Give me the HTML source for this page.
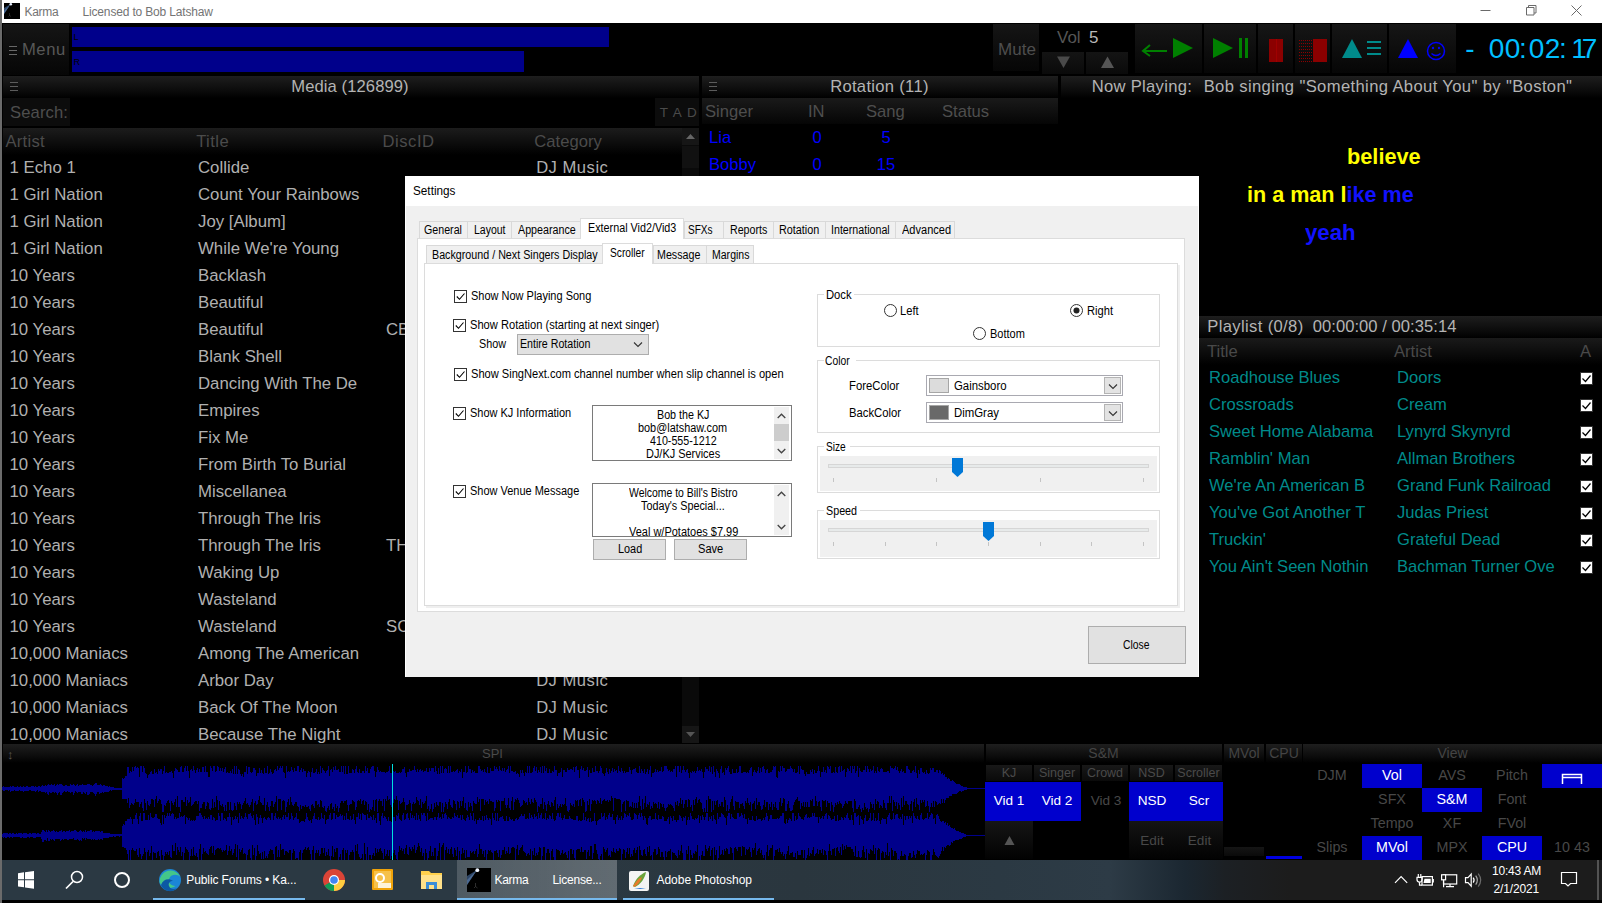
<!DOCTYPE html>
<html><head><meta charset="utf-8"><title>Karma</title>
<style>
html,body{margin:0;padding:0;background:#000;}
body{width:1602px;height:903px;position:relative;overflow:hidden;font-family:"Liberation Sans",sans-serif;}
.b{position:absolute;box-sizing:border-box;}
.t{position:absolute;white-space:pre;margin:0;padding:0;}
.hd{background:linear-gradient(#1e1e1e,#0a0a0a 70%,#000);}
.dlg .t{color:#000;}
svg{position:absolute;overflow:visible;}
</style></head><body>

<div class="b" style="left:0px;top:0px;width:1602px;height:23px;background:#fff;"></div>
<svg style="left:4px;top:3px" width="16" height="16" viewBox="0 0 16 16"><rect width="16" height="16" fill="#000"/><path d="M6.500 1.200L0 5v6z" fill="#3f618f" opacity=".75"/><path d="M6.500 1.200L0 8v3z" fill="#6f95c8" opacity=".5"/><circle cx="6.800" cy="1.300" r="1.300" fill="#e8f0ff"/><path d="M5.500 10v3M4.500 13.500l1-1 1.500 1" stroke="#333" stroke-width=".7" fill="none"/></svg>
<div class="t" style="left:24.52px;letter-spacing:-0.315px;top:3px;font-size:12px;line-height:18px;color:#747474;">Karma</div>
<div class="t" style="left:82.52px;letter-spacing:-0.165px;top:3px;font-size:12px;line-height:18px;color:#747474;">Licensed to Bob Latshaw</div>
<svg style="left:1470px;top:0" width="132" height="23" viewBox="0 0 132 23"><g stroke="#6a6a6a" stroke-width="1" fill="none"><path d="M10.5 10.5h10"/><path d="M56.5 7.500h7.5v7.500h-7.500z M58.500 7.500v-2h7.500v7.500h-2"/><path d="M101.500 5.500l10 10M111.500 5.500l-10 10"/></g></svg>
<div class="b" style="left:3px;top:24px;width:66px;height:51px;background:#111;background:linear-gradient(#151515,#060606)"></div>
<div class="t" style="left:21.94px;letter-spacing:0.613px;top:38px;font-size:16.6px;line-height:23px;color:#585858;">Menu</div>
<div class="b" style="left:72px;top:27px;width:537px;height:20px;background:#00008b;"></div>
<div class="b" style="left:72px;top:51px;width:452px;height:21px;background:#00008b;"></div>
<div class="t " style="left:73.5px;top:30px;font-size:9px;line-height:14px;color:#000;">L</div>
<div class="t " style="left:73.5px;top:55px;font-size:9px;line-height:14px;color:#000;">R</div>
<div class="b" style="left:993px;top:24px;width:46px;height:47px;background:#0e0e0e;background:linear-gradient(#151515,#060606)"></div>
<div class="t " style="left:994px;top:38px;font-size:17px;line-height:23px;color:#4e4e4e;width:46px;text-align:center;">Mute</div>
<div class="t " style="left:1057px;top:26px;font-size:17px;line-height:23px;color:#555;">Vol</div>
<div class="t " style="left:1089px;top:26px;font-size:17px;line-height:23px;color:#b8b8b8;">5</div>
<div class="b" style="left:1042px;top:52px;width:42px;height:22px;background:#111;background:linear-gradient(#141414,#0a0a0a)"></div>
<div class="b" style="left:1086px;top:52px;width:42px;height:22px;background:#111;background:linear-gradient(#141414,#0a0a0a)"></div>
<svg style="left:0;top:0" width="1602" height="100"><path d="M1057 56.500h13l-6.500 11.500z" fill="#4a4a4a"/><path d="M1107.500 56.500l6.500 11.500h-13z" fill="#555"/></svg>
<div class="b" style="left:1135px;top:24px;width:67px;height:49px;background:#0e0e0e;background:linear-gradient(#161616,#060606)"></div>
<div class="b" style="left:1204px;top:24px;width:52px;height:49px;background:#0e0e0e;background:linear-gradient(#161616,#060606)"></div>
<div class="b" style="left:1258px;top:24px;width:35px;height:49px;background:#0e0e0e;background:linear-gradient(#161616,#060606)"></div>
<div class="b" style="left:1295px;top:24px;width:35px;height:49px;background:#0e0e0e;background:linear-gradient(#161616,#060606)"></div>
<div class="b" style="left:1332px;top:24px;width:55px;height:49px;background:#0e0e0e;background:linear-gradient(#161616,#060606)"></div>
<div class="b" style="left:1389px;top:24px;width:67px;height:49px;background:#0e0e0e;background:linear-gradient(#161616,#060606)"></div>
<svg style="left:0;top:0" width="1602" height="100">
<g fill="#008000" stroke="none">
<path d="M1173 38l20 10-20 10z"/>
<path d="M1213 38l20 10-20 10z"/>
<rect x="1239" y="38" width="3" height="20"/><rect x="1245" y="38" width="3" height="20"/>
</g>
<path d="M1167 51h-24M1150 45l-7 6 7 5" stroke="#008000" stroke-width="2" fill="none"/>
<rect x="1269" y="39" width="14" height="23" fill="#8b0000"/><rect x="1276" y="39" width="1" height="23" fill="#a00000"/>
<rect x="1313" y="39" width="14" height="23" fill="#8b0000"/>
<g stroke="#8b0000" stroke-width="1" stroke-dasharray="1 1"><path d="M1299 40.500h14M1299 43.500h14M1299 46.500h14M1299 49.500h14M1299 52.500h14M1299 55.500h14M1299 58.500h14M1299 61.500h14"/></g>
<path d="M1342 58l10-19 10 19z" fill="#008b8b"/>
<path d="M1367 42h14M1367 48h14M1367 54h14" stroke="#008b8b" stroke-width="2"/>
<path d="M1398 58l10-19 10 19z" fill="#0000ff"/>
<circle cx="1436" cy="51" r="8.500" fill="none" stroke="#0000ff" stroke-width="1.500"/>
<circle cx="1433" cy="48" r="1.200" fill="#0000ff"/><circle cx="1439" cy="48" r="1.200" fill="#0000ff"/>
<path d="M1431.500 53.500q4.500 4 9 0" stroke="#0000ff" stroke-width="1.300" fill="none"/>
</svg>
<div class="t" style="left:0;top:0;font-size:28px;line-height:32px;color:#00bfff"><span style="position:absolute;left:1462px;top:33px;width:16px;text-align:center">-</span><span style="position:absolute;left:1478px;top:33px;width:10.5px;text-align:center"> </span><span style="position:absolute;left:1488.5px;top:33px;width:16px;text-align:center">0</span><span style="position:absolute;left:1504.5px;top:33px;width:16px;text-align:center">0</span><span style="position:absolute;left:1519px;top:33px;width:8px;text-align:center">:</span><span style="position:absolute;left:1528.5px;top:33px;width:16px;text-align:center">0</span><span style="position:absolute;left:1544.5px;top:33px;width:16px;text-align:center">2</span><span style="position:absolute;left:1559px;top:33px;width:8px;text-align:center">:</span><span style="position:absolute;left:1567px;top:33px;width:1px;text-align:center"> </span><span style="position:absolute;left:1571px;top:33px;width:16px;text-align:center">1</span><span style="position:absolute;left:1581.5px;top:33px;width:16px;text-align:center">7</span></div>
<div class="b hd" style="left:3px;top:76px;width:696px;height:22px"></div>
<div class="t" style="left:291.34px;letter-spacing:0.078px;top:75px;font-size:16.6px;line-height:23px;color:#b4b4b4;">Media (126899)</div>
<div class="b" style="left:3px;top:98px;width:67px;height:28px;background:#0c0c0c;"></div>
<div class="t" style="left:10.05px;letter-spacing:0.110px;top:101px;font-size:16.6px;line-height:23px;color:#4e4e4e;">Search:</div>
<div class="b" style="left:655px;top:98px;width:44px;height:28px;background:#0c0c0c;"></div>
<div class="t" style="left:659.70px;letter-spacing:1.045px;top:103px;font-size:13.5px;line-height:19px;color:#4a4a4a;">T A D</div>
<div class="b" style="left:3px;top:128px;width:679px;height:27px;background:linear-gradient(#1c1c1c,#000)"></div>
<div class="t" style="left:5.47px;letter-spacing:0.268px;top:130px;font-size:16.6px;line-height:23px;color:#4b4b4b;">Artist</div>
<div class="t" style="left:196.13px;letter-spacing:0.467px;top:130px;font-size:16.6px;line-height:23px;color:#4b4b4b;">Title</div>
<div class="t" style="left:382.44px;letter-spacing:0.556px;top:130px;font-size:16.6px;line-height:23px;color:#4b4b4b;">DiscID</div>
<div class="t" style="left:534.36px;letter-spacing:0.017px;top:130px;font-size:16.6px;line-height:23px;color:#4b4b4b;">Category</div>
<div class="b" style="left:3px;top:155px;width:679px;height:588px;overflow:hidden">
<div class="t " style="left:6.5px;top:1px;font-size:16.8px;line-height:23px;color:#b0b0b0;">1 Echo 1</div>
<div class="t " style="left:195px;top:1px;font-size:16.8px;line-height:23px;color:#b0b0b0;">Collide</div>
<div class="t" style="left:533.14px;letter-spacing:0.507px;top:1px;font-size:16.6px;line-height:23px;color:#b0b0b0;">DJ Music</div>
<div class="t " style="left:6.5px;top:28px;font-size:16.8px;line-height:23px;color:#b0b0b0;">1 Girl Nation</div>
<div class="t " style="left:195px;top:28px;font-size:16.8px;line-height:23px;color:#b0b0b0;">Count Your Rainbows</div>
<div class="t" style="left:533.14px;letter-spacing:0.507px;top:28px;font-size:16.6px;line-height:23px;color:#b0b0b0;">DJ Music</div>
<div class="t " style="left:6.5px;top:55px;font-size:16.8px;line-height:23px;color:#b0b0b0;">1 Girl Nation</div>
<div class="t " style="left:195px;top:55px;font-size:16.8px;line-height:23px;color:#b0b0b0;">Joy [Album]</div>
<div class="t" style="left:533.14px;letter-spacing:0.507px;top:55px;font-size:16.6px;line-height:23px;color:#b0b0b0;">DJ Music</div>
<div class="t " style="left:6.5px;top:82px;font-size:16.8px;line-height:23px;color:#b0b0b0;">1 Girl Nation</div>
<div class="t " style="left:195px;top:82px;font-size:16.8px;line-height:23px;color:#b0b0b0;">While We're Young</div>
<div class="t" style="left:533.14px;letter-spacing:0.507px;top:82px;font-size:16.6px;line-height:23px;color:#b0b0b0;">DJ Music</div>
<div class="t " style="left:6.5px;top:109px;font-size:16.8px;line-height:23px;color:#b0b0b0;">10 Years</div>
<div class="t " style="left:195px;top:109px;font-size:16.8px;line-height:23px;color:#b0b0b0;">Backlash</div>
<div class="t" style="left:533.14px;letter-spacing:0.507px;top:109px;font-size:16.6px;line-height:23px;color:#b0b0b0;">DJ Music</div>
<div class="t " style="left:6.5px;top:136px;font-size:16.8px;line-height:23px;color:#b0b0b0;">10 Years</div>
<div class="t " style="left:195px;top:136px;font-size:16.8px;line-height:23px;color:#b0b0b0;">Beautiful</div>
<div class="t" style="left:533.14px;letter-spacing:0.507px;top:136px;font-size:16.6px;line-height:23px;color:#b0b0b0;">DJ Music</div>
<div class="t " style="left:6.5px;top:163px;font-size:16.8px;line-height:23px;color:#b0b0b0;">10 Years</div>
<div class="t " style="left:195px;top:163px;font-size:16.8px;line-height:23px;color:#b0b0b0;">Beautiful</div>
<div class="t " style="left:383px;top:163px;font-size:16.8px;line-height:23px;color:#b0b0b0;">CB</div>
<div class="t" style="left:533.14px;letter-spacing:0.507px;top:163px;font-size:16.6px;line-height:23px;color:#b0b0b0;">DJ Music</div>
<div class="t " style="left:6.5px;top:190px;font-size:16.8px;line-height:23px;color:#b0b0b0;">10 Years</div>
<div class="t " style="left:195px;top:190px;font-size:16.8px;line-height:23px;color:#b0b0b0;">Blank Shell</div>
<div class="t" style="left:533.14px;letter-spacing:0.507px;top:190px;font-size:16.6px;line-height:23px;color:#b0b0b0;">DJ Music</div>
<div class="t " style="left:6.5px;top:217px;font-size:16.8px;line-height:23px;color:#b0b0b0;">10 Years</div>
<div class="t " style="left:195px;top:217px;font-size:16.8px;line-height:23px;color:#b0b0b0;">Dancing With The De</div>
<div class="t" style="left:533.14px;letter-spacing:0.507px;top:217px;font-size:16.6px;line-height:23px;color:#b0b0b0;">DJ Music</div>
<div class="t " style="left:6.5px;top:244px;font-size:16.8px;line-height:23px;color:#b0b0b0;">10 Years</div>
<div class="t " style="left:195px;top:244px;font-size:16.8px;line-height:23px;color:#b0b0b0;">Empires</div>
<div class="t" style="left:533.14px;letter-spacing:0.507px;top:244px;font-size:16.6px;line-height:23px;color:#b0b0b0;">DJ Music</div>
<div class="t " style="left:6.5px;top:271px;font-size:16.8px;line-height:23px;color:#b0b0b0;">10 Years</div>
<div class="t " style="left:195px;top:271px;font-size:16.8px;line-height:23px;color:#b0b0b0;">Fix Me</div>
<div class="t" style="left:533.14px;letter-spacing:0.507px;top:271px;font-size:16.6px;line-height:23px;color:#b0b0b0;">DJ Music</div>
<div class="t " style="left:6.5px;top:298px;font-size:16.8px;line-height:23px;color:#b0b0b0;">10 Years</div>
<div class="t " style="left:195px;top:298px;font-size:16.8px;line-height:23px;color:#b0b0b0;">From Birth To Burial</div>
<div class="t" style="left:533.14px;letter-spacing:0.507px;top:298px;font-size:16.6px;line-height:23px;color:#b0b0b0;">DJ Music</div>
<div class="t " style="left:6.5px;top:325px;font-size:16.8px;line-height:23px;color:#b0b0b0;">10 Years</div>
<div class="t " style="left:195px;top:325px;font-size:16.8px;line-height:23px;color:#b0b0b0;">Miscellanea</div>
<div class="t" style="left:533.14px;letter-spacing:0.507px;top:325px;font-size:16.6px;line-height:23px;color:#b0b0b0;">DJ Music</div>
<div class="t " style="left:6.5px;top:352px;font-size:16.8px;line-height:23px;color:#b0b0b0;">10 Years</div>
<div class="t " style="left:195px;top:352px;font-size:16.8px;line-height:23px;color:#b0b0b0;">Through The Iris</div>
<div class="t" style="left:533.14px;letter-spacing:0.507px;top:352px;font-size:16.6px;line-height:23px;color:#b0b0b0;">DJ Music</div>
<div class="t " style="left:6.5px;top:379px;font-size:16.8px;line-height:23px;color:#b0b0b0;">10 Years</div>
<div class="t " style="left:195px;top:379px;font-size:16.8px;line-height:23px;color:#b0b0b0;">Through The Iris</div>
<div class="t " style="left:383px;top:379px;font-size:16.8px;line-height:23px;color:#b0b0b0;">TH</div>
<div class="t" style="left:533.14px;letter-spacing:0.507px;top:379px;font-size:16.6px;line-height:23px;color:#b0b0b0;">DJ Music</div>
<div class="t " style="left:6.5px;top:406px;font-size:16.8px;line-height:23px;color:#b0b0b0;">10 Years</div>
<div class="t " style="left:195px;top:406px;font-size:16.8px;line-height:23px;color:#b0b0b0;">Waking Up</div>
<div class="t" style="left:533.14px;letter-spacing:0.507px;top:406px;font-size:16.6px;line-height:23px;color:#b0b0b0;">DJ Music</div>
<div class="t " style="left:6.5px;top:433px;font-size:16.8px;line-height:23px;color:#b0b0b0;">10 Years</div>
<div class="t " style="left:195px;top:433px;font-size:16.8px;line-height:23px;color:#b0b0b0;">Wasteland</div>
<div class="t" style="left:533.14px;letter-spacing:0.507px;top:433px;font-size:16.6px;line-height:23px;color:#b0b0b0;">DJ Music</div>
<div class="t " style="left:6.5px;top:460px;font-size:16.8px;line-height:23px;color:#b0b0b0;">10 Years</div>
<div class="t " style="left:195px;top:460px;font-size:16.8px;line-height:23px;color:#b0b0b0;">Wasteland</div>
<div class="t " style="left:383px;top:460px;font-size:16.8px;line-height:23px;color:#b0b0b0;">SC</div>
<div class="t" style="left:533.14px;letter-spacing:0.507px;top:460px;font-size:16.6px;line-height:23px;color:#b0b0b0;">DJ Music</div>
<div class="t " style="left:6.5px;top:487px;font-size:16.8px;line-height:23px;color:#b0b0b0;">10,000 Maniacs</div>
<div class="t " style="left:195px;top:487px;font-size:16.8px;line-height:23px;color:#b0b0b0;">Among The American</div>
<div class="t" style="left:533.14px;letter-spacing:0.507px;top:487px;font-size:16.6px;line-height:23px;color:#b0b0b0;">DJ Music</div>
<div class="t " style="left:6.5px;top:514px;font-size:16.8px;line-height:23px;color:#b0b0b0;">10,000 Maniacs</div>
<div class="t " style="left:195px;top:514px;font-size:16.8px;line-height:23px;color:#b0b0b0;">Arbor Day</div>
<div class="t" style="left:533.14px;letter-spacing:0.507px;top:514px;font-size:16.6px;line-height:23px;color:#b0b0b0;">DJ Music</div>
<div class="t " style="left:6.5px;top:541px;font-size:16.8px;line-height:23px;color:#b0b0b0;">10,000 Maniacs</div>
<div class="t " style="left:195px;top:541px;font-size:16.8px;line-height:23px;color:#b0b0b0;">Back Of The Moon</div>
<div class="t" style="left:533.14px;letter-spacing:0.507px;top:541px;font-size:16.6px;line-height:23px;color:#b0b0b0;">DJ Music</div>
<div class="t " style="left:6.5px;top:568px;font-size:16.8px;line-height:23px;color:#b0b0b0;">10,000 Maniacs</div>
<div class="t " style="left:195px;top:568px;font-size:16.8px;line-height:23px;color:#b0b0b0;">Because The Night</div>
<div class="t" style="left:533.14px;letter-spacing:0.507px;top:568px;font-size:16.6px;line-height:23px;color:#b0b0b0;">DJ Music</div>
</div>
<div class="b" style="left:682px;top:128px;width:17px;height:615px;background:#0a0a0a;"></div>
<div class="b" style="left:682px;top:128px;width:17px;height:17px;background:#161616;"></div>
<div class="b" style="left:682px;top:726px;width:17px;height:17px;background:#161616;"></div>
<div class="b" style="left:682px;top:146px;width:17px;height:22px;background:#111;"></div>
<svg style="left:0;top:0" width="1602" height="903"><path d="M686 139l4.500-5 4.500 5z" fill="#666"/><path d="M686 732l4.500 5 4.500-5z" fill="#555"/></svg>
<div class="b hd" style="left:702px;top:76px;width:356px;height:22px"></div>
<div class="t" style="left:830.14px;letter-spacing:0.305px;top:75px;font-size:16.6px;line-height:23px;color:#b4b4b4;">Rotation (11)</div>
<div class="b" style="left:702px;top:98px;width:356px;height:26px;background:linear-gradient(#1a1a1a,#050505)"></div>
<div class="t " style="left:705px;top:100px;font-size:16.6px;line-height:23px;color:#4e4e4e;">Singer</div>
<div class="t " style="left:808px;top:100px;font-size:16.6px;line-height:23px;color:#4e4e4e;">IN</div>
<div class="t " style="left:866px;top:100px;font-size:16.6px;line-height:23px;color:#4e4e4e;">Sang</div>
<div class="t " style="left:942px;top:100px;font-size:16.6px;line-height:23px;color:#4e4e4e;">Status</div>
<div class="t " style="left:709px;top:126px;font-size:16.6px;line-height:23px;color:#0000ff;">Lia</div>
<div class="t " style="left:797px;top:126px;font-size:16.6px;line-height:23px;color:#0000ff;width:40px;text-align:center;">0</div>
<div class="t " style="left:866px;top:126px;font-size:16.6px;line-height:23px;color:#0000ff;width:40px;text-align:center;">5</div>
<div class="t " style="left:709px;top:153px;font-size:16.6px;line-height:23px;color:#0000ff;">Bobby</div>
<div class="t " style="left:797px;top:153px;font-size:16.6px;line-height:23px;color:#0000ff;width:40px;text-align:center;">0</div>
<div class="t " style="left:866px;top:153px;font-size:16.6px;line-height:23px;color:#0000ff;width:40px;text-align:center;">15</div>
<svg style="left:0;top:0" width="800" height="100" shape-rendering="crispEdges"><g fill="#686868"><rect x="9" y="46" width="8" height="1"/><rect x="9" y="50" width="8" height="1"/><rect x="9" y="54" width="8" height="1"/></g><g fill="#5c5c5c"><rect x="10" y="82" width="8" height="1"/><rect x="10" y="86" width="8" height="1"/><rect x="10" y="90" width="8" height="1"/><rect x="709" y="82" width="8" height="1"/><rect x="709" y="86" width="8" height="1"/><rect x="709" y="90" width="8" height="1"/></g></svg>
<div class="b hd" style="left:1061px;top:76px;width:541px;height:22px"></div>
<div class="t" style="left:1091.64px;letter-spacing:0.309px;top:75px;font-size:16.6px;line-height:23px;color:#b4b4b4;">Now Playing:</div>
<div class="t" style="left:1203.64px;letter-spacing:0.371px;top:75px;font-size:16.6px;line-height:23px;color:#b4b4b4;">Bob singing "Something About You" by "Boston"</div>
<div class="t" style="left:1347.37px;transform:scaleX(1.0105);transform-origin:0 50%;top:143px;font-size:21.5px;line-height:28px;color:#ffff00;font-weight:bold;">believe</div>
<div class="t" style="left:1247.29px;transform:scaleX(1.0033);transform-origin:0 50%;top:181px;font-size:21.5px;line-height:28px;color:#ffff00;font-weight:bold;">in a man l<span style="color:#1212ff">ike me</span></div>
<div class="t" style="left:1305.03px;transform:scaleX(1.0336);transform-origin:0 50%;top:219px;font-size:21.5px;line-height:28px;color:#1212ff;font-weight:bold;">yeah</div>
<div class="b hd" style="left:1061px;top:316px;width:541px;height:22px"></div>
<div class="t" style="left:1207.24px;letter-spacing:0.359px;top:315px;font-size:16.6px;line-height:23px;color:#b4b4b4;">Playlist (0/8)</div>
<div class="t" style="left:1312.75px;letter-spacing:0.037px;top:315px;font-size:16.6px;line-height:23px;color:#b4b4b4;">00:00:00 / 00:35:14</div>
<div class="b" style="left:1061px;top:338px;width:541px;height:27px;background:linear-gradient(#1a1a1a,#000)"></div>
<div class="t " style="left:1207px;top:340px;font-size:16.6px;line-height:23px;color:#494949;">Title</div>
<div class="t " style="left:1394px;top:340px;font-size:16.6px;line-height:23px;color:#494949;">Artist</div>
<div class="t " style="left:1580px;top:340px;font-size:16.6px;line-height:23px;color:#494949;">A</div>
<div class="t " style="left:1209px;top:366px;font-size:16.6px;line-height:23px;color:#008b8b;">Roadhouse Blues</div>
<div class="t " style="left:1397px;top:366px;font-size:16.6px;line-height:23px;color:#008b8b;">Doors</div>
<svg style="left:1580px;top:372px" width="13" height="13" viewBox="0 0 13 13"><rect width="13" height="13" fill="#fff"/><rect x=".5" y=".5" width="12" height="12" fill="none" stroke="#333"/><path d="M2.500 6.500l3 3 5-6" stroke="#000" stroke-width="1.200" fill="none"/></svg>
<div class="t " style="left:1209px;top:393px;font-size:16.6px;line-height:23px;color:#008b8b;">Crossroads</div>
<div class="t " style="left:1397px;top:393px;font-size:16.6px;line-height:23px;color:#008b8b;">Cream</div>
<svg style="left:1580px;top:399px" width="13" height="13" viewBox="0 0 13 13"><rect width="13" height="13" fill="#fff"/><rect x=".5" y=".5" width="12" height="12" fill="none" stroke="#333"/><path d="M2.500 6.500l3 3 5-6" stroke="#000" stroke-width="1.200" fill="none"/></svg>
<div class="t " style="left:1209px;top:420px;font-size:16.6px;line-height:23px;color:#008b8b;">Sweet Home Alabama</div>
<div class="t " style="left:1397px;top:420px;font-size:16.6px;line-height:23px;color:#008b8b;">Lynyrd Skynyrd</div>
<svg style="left:1580px;top:426px" width="13" height="13" viewBox="0 0 13 13"><rect width="13" height="13" fill="#fff"/><rect x=".5" y=".5" width="12" height="12" fill="none" stroke="#333"/><path d="M2.500 6.500l3 3 5-6" stroke="#000" stroke-width="1.200" fill="none"/></svg>
<div class="t " style="left:1209px;top:447px;font-size:16.6px;line-height:23px;color:#008b8b;">Ramblin' Man</div>
<div class="t " style="left:1397px;top:447px;font-size:16.6px;line-height:23px;color:#008b8b;">Allman Brothers</div>
<svg style="left:1580px;top:453px" width="13" height="13" viewBox="0 0 13 13"><rect width="13" height="13" fill="#fff"/><rect x=".5" y=".5" width="12" height="12" fill="none" stroke="#333"/><path d="M2.500 6.500l3 3 5-6" stroke="#000" stroke-width="1.200" fill="none"/></svg>
<div class="t " style="left:1209px;top:474px;font-size:16.6px;line-height:23px;color:#008b8b;">We're An American B</div>
<div class="t " style="left:1397px;top:474px;font-size:16.6px;line-height:23px;color:#008b8b;">Grand Funk Railroad</div>
<svg style="left:1580px;top:480px" width="13" height="13" viewBox="0 0 13 13"><rect width="13" height="13" fill="#fff"/><rect x=".5" y=".5" width="12" height="12" fill="none" stroke="#333"/><path d="M2.500 6.500l3 3 5-6" stroke="#000" stroke-width="1.200" fill="none"/></svg>
<div class="t " style="left:1209px;top:501px;font-size:16.6px;line-height:23px;color:#008b8b;">You've Got Another T</div>
<div class="t " style="left:1397px;top:501px;font-size:16.6px;line-height:23px;color:#008b8b;">Judas Priest</div>
<svg style="left:1580px;top:507px" width="13" height="13" viewBox="0 0 13 13"><rect width="13" height="13" fill="#fff"/><rect x=".5" y=".5" width="12" height="12" fill="none" stroke="#333"/><path d="M2.500 6.500l3 3 5-6" stroke="#000" stroke-width="1.200" fill="none"/></svg>
<div class="t " style="left:1209px;top:528px;font-size:16.6px;line-height:23px;color:#008b8b;">Truckin'</div>
<div class="t " style="left:1397px;top:528px;font-size:16.6px;line-height:23px;color:#008b8b;">Grateful Dead</div>
<svg style="left:1580px;top:534px" width="13" height="13" viewBox="0 0 13 13"><rect width="13" height="13" fill="#fff"/><rect x=".5" y=".5" width="12" height="12" fill="none" stroke="#333"/><path d="M2.500 6.500l3 3 5-6" stroke="#000" stroke-width="1.200" fill="none"/></svg>
<div class="t " style="left:1209px;top:555px;font-size:16.6px;line-height:23px;color:#008b8b;">You Ain't Seen Nothin</div>
<div class="t " style="left:1397px;top:555px;font-size:16.6px;line-height:23px;color:#008b8b;">Bachman Turner Ove</div>
<svg style="left:1580px;top:561px" width="13" height="13" viewBox="0 0 13 13"><rect width="13" height="13" fill="#fff"/><rect x=".5" y=".5" width="12" height="12" fill="none" stroke="#333"/><path d="M2.500 6.500l3 3 5-6" stroke="#000" stroke-width="1.200" fill="none"/></svg>
<div class="b hd" style="left:3px;top:744px;width:981px;height:19px"></div>
<div class="t " style="left:482px;top:744px;font-size:13px;line-height:19px;color:#4a4a4a;">SPI</div>
<div class="t " style="left:7px;top:745px;font-size:13px;line-height:19px;color:#555;">↕</div>
<svg style="left:0;top:0" width="1602" height="903" shape-rendering="crispEdges"><path fill="#00008b" d="M2 787v3h1v-3zM3 786v5h1v-5zM4 787v4h1v-4zM5 787v3h1v-3zM6 787v3h1v-3zM7 787v3h1v-3zM8 787v4h1v-4zM9 787v3h1v-3zM10 786v6h1v-6zM11 787v4h1v-4zM12 786v5h1v-5zM13 786v5h1v-5zM14 787v3h1v-3zM15 787v4h1v-4zM16 787v4h1v-4zM17 786v5h1v-5zM18 787v4h1v-4zM19 787v3h1v-3zM20 786v5h1v-5zM21 787v4h1v-4zM22 787v4h1v-4zM23 786v6h1v-6zM24 787v4h1v-4zM25 787v4h1v-4zM26 786v5h1v-5zM27 786v5h1v-5zM28 787v4h1v-4zM29 787v3h1v-3zM30 787v3h1v-3zM31 786v5h1v-5zM32 786v5h1v-5zM33 786v5h1v-5zM34 787v4h1v-4zM35 786v6h1v-6zM36 787v4h1v-4zM37 787v3h1v-3zM38 786v6h1v-6zM39 786v5h1v-5zM40 787v4h1v-4zM41 786v6h1v-6zM42 785v7h1v-7zM43 786v6h1v-6zM44 786v6h1v-6zM45 785v8h1v-8zM46 786v6h1v-6zM47 785v9h1v-9zM48 784v11h1v-11zM49 785v7h1v-7zM50 785v8h1v-8zM51 784v9h1v-9zM52 785v7h1v-7zM53 785v7h1v-7zM54 784v9h1v-9zM55 786v6h1v-6zM56 785v8h1v-8zM57 784v11h1v-11zM58 785v8h1v-8zM59 784v8h1v-8zM60 784v11h1v-11zM61 784v11h1v-11zM62 785v8h1v-8zM63 786v6h1v-6zM64 786v5h1v-5zM65 785v7h1v-7zM66 785v7h1v-7zM67 786v5h1v-5zM68 786v6h1v-6zM69 786v6h1v-6zM70 784v9h1v-9zM71 785v7h1v-7zM72 785v7h1v-7zM73 784v11h1v-11zM74 785v8h1v-8zM75 786v5h1v-5zM76 785v7h1v-7zM77 784v9h1v-9zM78 786v6h1v-6zM79 785v7h1v-7zM80 785v7h1v-7zM81 785v9h1v-9zM82 784v10h1v-10zM83 785v7h1v-7zM84 785v8h1v-8zM85 785v9h1v-9zM86 785v7h1v-7zM87 784v11h1v-11zM88 784v11h1v-11zM89 784v10h1v-10zM90 785v7h1v-7zM91 785v7h1v-7zM92 786v6h1v-6zM93 785v8h1v-8zM94 784v10h1v-10zM95 783v13h1v-13zM96 783v11h1v-11zM97 785v7h1v-7zM98 785v7h1v-7zM99 785v9h1v-9zM100 784v9h1v-9zM101 785v8h1v-8zM102 786v6h1v-6zM103 785v8h1v-8zM104 785v7h1v-7zM105 786v6h1v-6zM106 786v6h1v-6zM107 786v6h1v-6zM108 787v5h1v-5zM109 786v5h1v-5zM110 787v3h1v-3zM111 787v4h1v-4zM112 787v3h1v-3zM113 787v3h1v-3zM114 788v2h1v-2zM115 788v2h1v-2zM116 788v2h1v-2zM117 788v2h1v-2zM118 788v2h1v-2zM119 788v2h1v-2zM120 788v2h1v-2zM121 788v2h1v-2zM122 778v21h1v-21zM123 779v20h1v-20zM124 778v21h1v-21zM125 776v23h1v-23zM126 776v23h1v-23zM127 767v36h1v-36zM128 767v31h1v-31zM129 773v35h1v-35zM130 771v34h1v-34zM131 772v31h1v-31zM132 767v37h1v-37zM133 771v34h1v-34zM134 767v36h1v-36zM135 766v33h1v-33zM136 768v34h1v-34zM137 767v35h1v-35zM138 768v34h1v-34zM139 777v30h1v-30zM140 766v38h1v-38zM141 766v36h1v-36zM142 772v36h1v-36zM143 766v45h1v-45zM144 768v31h1v-31zM145 773v30h1v-30zM146 774v36h1v-36zM147 778v23h1v-23zM148 775v30h1v-30zM149 774v32h1v-32zM150 772v32h1v-32zM151 771v28h1v-28zM152 774v25h1v-25zM153 774v26h1v-26zM154 769v38h1v-38zM155 773v26h1v-26zM156 772v24h1v-24zM157 774v29h1v-29zM158 769v32h1v-32zM159 771v28h1v-28zM160 769v31h1v-31zM161 769v35h1v-35zM162 774v38h1v-38zM163 771v41h1v-41zM164 766v39h1v-39zM165 773v33h1v-33zM166 772v31h1v-31zM167 773v28h1v-28zM168 773v27h1v-27zM169 772v31h1v-31zM170 772v39h1v-39zM171 771v30h1v-30zM172 773v30h1v-30zM173 778v27h1v-27zM174 771v31h1v-31zM175 768v31h1v-31zM176 769v38h1v-38zM177 770v26h1v-26zM178 772v35h1v-35zM179 772v35h1v-35zM180 767v45h1v-45zM181 766v34h1v-34zM182 772v28h1v-28zM183 772v30h1v-30zM184 768v34h1v-34zM185 766v31h1v-31zM186 771v35h1v-35zM187 766v34h1v-34zM188 771v32h1v-32zM189 778v24h1v-24zM190 770v27h1v-27zM191 769v37h1v-37zM192 771v34h1v-34zM193 766v38h1v-38zM194 770v32h1v-32zM195 773v28h1v-28zM196 770v31h1v-31zM197 768v36h1v-36zM198 772v29h1v-29zM199 769v42h1v-42zM200 772v36h1v-36zM201 772v36h1v-36zM202 767v37h1v-37zM203 767v35h1v-35zM204 772v30h1v-30zM205 766v43h1v-43zM206 772v34h1v-34zM207 772v30h1v-30zM208 777v26h1v-26zM209 777v32h1v-32zM210 766v44h1v-44zM211 768v40h1v-40zM212 771v28h1v-28zM213 766v42h1v-42zM214 766v36h1v-36zM215 772v35h1v-35zM216 771v25h1v-25zM217 766v34h1v-34zM218 767v43h1v-43zM219 771v30h1v-30zM220 768v37h1v-37zM221 771v35h1v-35zM222 768v36h1v-36zM223 772v35h1v-35zM224 769v42h1v-42zM225 767v38h1v-38zM226 773v38h1v-38zM227 772v30h1v-30zM228 773v29h1v-29zM229 773v37h1v-37zM230 771v31h1v-31zM231 773v37h1v-37zM232 769v42h1v-42zM233 774v36h1v-36zM234 766v37h1v-37zM235 774v32h1v-32zM236 766v44h1v-44zM237 774v28h1v-28zM238 769v35h1v-35zM239 770v32h1v-32zM240 774v30h1v-30zM241 776v33h1v-33zM242 774v31h1v-31zM243 777v26h1v-26zM244 772v29h1v-29zM245 772v26h1v-26zM246 766v38h1v-38zM247 774v29h1v-29zM248 767v38h1v-38zM249 767v40h1v-40zM250 772v33h1v-33zM251 773v29h1v-29zM252 772v27h1v-27zM253 768v43h1v-43zM254 768v35h1v-35zM255 770v31h1v-31zM256 776v29h1v-29zM257 773v31h1v-31zM258 773v27h1v-27zM259 768v28h1v-28zM260 773v29h1v-29zM261 770v33h1v-33zM262 773v32h1v-32zM263 774v31h1v-31zM264 768v30h1v-30zM265 773v38h1v-38zM266 773v32h1v-32zM267 766v36h1v-36zM268 774v33h1v-33zM269 773v38h1v-38zM270 769v37h1v-37zM271 772v29h1v-29zM272 774v27h1v-27zM273 773v34h1v-34zM274 770v34h1v-34zM275 769v33h1v-33zM276 771v25h1v-25zM277 766v45h1v-45zM278 770v29h1v-29zM279 768v31h1v-31zM280 766v33h1v-33zM281 768v42h1v-42zM282 766v35h1v-35zM283 772v28h1v-28zM284 773v28h1v-28zM285 778v34h1v-34zM286 766v41h1v-41zM287 772v30h1v-30zM288 771v28h1v-28zM289 772v33h1v-33zM290 771v26h1v-26zM291 767v35h1v-35zM292 770v35h1v-35zM293 772v34h1v-34zM294 768v36h1v-36zM295 771v31h1v-31zM296 771v31h1v-31zM297 766v40h1v-40zM298 766v41h1v-41zM299 772v39h1v-39zM300 770v35h1v-35zM301 768v41h1v-41zM302 772v34h1v-34zM303 769v37h1v-37zM304 771v36h1v-36zM305 771v34h1v-34zM306 777v30h1v-30zM307 773v34h1v-34zM308 771v35h1v-35zM309 772v37h1v-37zM310 777v34h1v-34zM311 772v33h1v-33zM312 768v36h1v-36zM313 773v33h1v-33zM314 773v35h1v-35zM315 772v29h1v-29zM316 769v32h1v-32zM317 774v31h1v-31zM318 772v32h1v-32zM319 774v33h1v-33zM320 766v34h1v-34zM321 773v28h1v-28zM322 768v39h1v-39zM323 770v38h1v-38zM324 771v35h1v-35zM325 773v38h1v-38zM326 771v41h1v-41zM327 770v38h1v-38zM328 766v40h1v-40zM329 776v34h1v-34zM330 770v34h1v-34zM331 769v34h1v-34zM332 772v37h1v-37zM333 767v40h1v-40zM334 770v41h1v-41zM335 766v38h1v-38zM336 770v38h1v-38zM337 770v36h1v-36zM338 769v43h1v-43zM339 772v36h1v-36zM340 772v31h1v-31zM341 766v35h1v-35zM342 772v29h1v-29zM343 766v37h1v-37zM344 774v27h1v-27zM345 766v35h1v-35zM346 774v26h1v-26zM347 774v31h1v-31zM348 766v45h1v-45zM349 773v32h1v-32zM350 773v31h1v-31zM351 773v31h1v-31zM352 769v31h1v-31zM353 770v31h1v-31zM354 773v29h1v-29zM355 769v41h1v-41zM356 766v41h1v-41zM357 772v29h1v-29zM358 773v27h1v-27zM359 769v32h1v-32zM360 773v26h1v-26zM361 773v31h1v-31zM362 771v30h1v-30zM363 771v29h1v-29zM364 773v32h1v-32zM365 766v35h1v-35zM366 771v31h1v-31zM367 768v42h1v-42zM368 773v31h1v-31zM369 773v39h1v-39zM370 769v40h1v-40zM371 767v43h1v-43zM372 766v41h1v-41zM373 766v34h1v-34zM374 771v40h1v-40zM375 777v23h1v-23zM376 772v27h1v-27zM377 767v45h1v-45zM378 770v31h1v-31zM379 772v27h1v-27zM380 771v30h1v-30zM381 772v29h1v-29zM382 772v34h1v-34zM383 772v27h1v-27zM384 772v39h1v-39zM385 773v26h1v-26zM386 772v29h1v-29zM387 772v24h1v-24zM388 771v29h1v-29zM389 766v33h1v-33zM390 773v32h1v-32zM391 773v34h1v-34zM392 777v24h1v-24zM393 771v32h1v-32zM394 772v27h1v-27zM395 771v29h1v-29zM396 773v23h1v-23zM397 773v27h1v-27zM398 773v37h1v-37zM399 772v29h1v-29zM400 773v31h1v-31zM401 772v31h1v-31zM402 769v33h1v-33zM403 769v29h1v-29zM404 767v35h1v-35zM405 773v37h1v-37zM406 777v28h1v-28zM407 772v33h1v-33zM408 772v32h1v-32zM409 769v31h1v-31zM410 771v32h1v-32zM411 771v40h1v-40zM412 770v34h1v-34zM413 770v32h1v-32zM414 766v38h1v-38zM415 770v33h1v-33zM416 772v25h1v-25zM417 769v31h1v-31zM418 772v29h1v-29zM419 770v35h1v-35zM420 769v30h1v-30zM421 771v37h1v-37zM422 770v32h1v-32zM423 772v32h1v-32zM424 771v32h1v-32zM425 771v30h1v-30zM426 768v28h1v-28zM427 772v37h1v-37zM428 772v34h1v-34zM429 768v43h1v-43zM430 771v38h1v-38zM431 768v36h1v-36zM432 768v44h1v-44zM433 768v41h1v-41zM434 772v31h1v-31zM435 766v41h1v-41zM436 771v31h1v-31zM437 774v31h1v-31zM438 768v38h1v-38zM439 774v28h1v-28zM440 766v36h1v-36zM441 773v39h1v-39zM442 766v37h1v-37zM443 773v39h1v-39zM444 769v38h1v-38zM445 768v34h1v-34zM446 769v35h1v-35zM447 773v36h1v-36zM448 766v36h1v-36zM449 773v26h1v-26zM450 766v39h1v-39zM451 772v35h1v-35zM452 772v36h1v-36zM453 771v29h1v-29zM454 772v29h1v-29zM455 771v33h1v-33zM456 770v40h1v-40zM457 769v32h1v-32zM458 773v29h1v-29zM459 771v37h1v-37zM460 772v29h1v-29zM461 769v37h1v-37zM462 778v23h1v-23zM463 772v25h1v-25zM464 772v36h1v-36zM465 766v37h1v-37zM466 773v37h1v-37zM467 772v39h1v-39zM468 766v36h1v-36zM469 769v38h1v-38zM470 769v34h1v-34zM471 773v33h1v-33zM472 770v41h1v-41zM473 772v29h1v-29zM474 771v32h1v-32zM475 773v31h1v-31zM476 773v31h1v-31zM477 773v24h1v-24zM478 766v36h1v-36zM479 766v33h1v-33zM480 769v42h1v-42zM481 771v28h1v-28zM482 770v29h1v-29zM483 772v27h1v-27zM484 769v36h1v-36zM485 772v28h1v-28zM486 773v29h1v-29zM487 767v34h1v-34zM488 773v31h1v-31zM489 773v26h1v-26zM490 768v33h1v-33zM491 771v30h1v-30zM492 771v31h1v-31zM493 771v31h1v-31zM494 766v45h1v-45zM495 769v39h1v-39zM496 767v33h1v-33zM497 769v33h1v-33zM498 771v29h1v-29zM499 766v35h1v-35zM500 770v41h1v-41zM501 771v30h1v-30zM502 768v33h1v-33zM503 771v30h1v-30zM504 768v30h1v-30zM505 772v33h1v-33zM506 770v38h1v-38zM507 769v36h1v-36zM508 766v32h1v-32zM509 773v35h1v-35zM510 766v44h1v-44zM511 771v30h1v-30zM512 771v26h1v-26zM513 772v38h1v-38zM514 772v30h1v-30zM515 771v28h1v-28zM516 774v26h1v-26zM517 773v25h1v-25zM518 774v26h1v-26zM519 777v26h1v-26zM520 770v37h1v-37zM521 773v33h1v-33zM522 770v35h1v-35zM523 773v27h1v-27zM524 776v25h1v-25zM525 772v31h1v-31zM526 773v29h1v-29zM527 766v39h1v-39zM528 773v25h1v-25zM529 766v36h1v-36zM530 773v31h1v-31zM531 773v26h1v-26zM532 772v30h1v-30zM533 768v35h1v-35zM534 766v32h1v-32zM535 771v29h1v-29zM536 767v35h1v-35zM537 773v39h1v-39zM538 770v36h1v-36zM539 772v35h1v-35zM540 767v37h1v-37zM541 773v31h1v-31zM542 766v32h1v-32zM543 773v36h1v-36zM544 766v36h1v-36zM545 771v34h1v-34zM546 768v43h1v-43zM547 773v31h1v-31zM548 773v28h1v-28zM549 769v36h1v-36zM550 773v34h1v-34zM551 773v29h1v-29zM552 771v32h1v-32zM553 772v34h1v-34zM554 766v34h1v-34zM555 770v27h1v-27zM556 770v40h1v-40zM557 776v28h1v-28zM558 773v35h1v-35zM559 773v33h1v-33zM560 772v32h1v-32zM561 768v39h1v-39zM562 777v27h1v-27zM563 770v35h1v-35zM564 770v34h1v-34zM565 772v26h1v-26zM566 772v34h1v-34zM567 768v43h1v-43zM568 770v42h1v-42zM569 770v40h1v-40zM570 769v34h1v-34zM571 769v36h1v-36zM572 770v36h1v-36zM573 767v37h1v-37zM574 772v35h1v-35zM575 767v33h1v-33zM576 766v35h1v-35zM577 770v30h1v-30zM578 770v36h1v-36zM579 778v22h1v-22zM580 769v30h1v-30zM581 766v40h1v-40zM582 770v28h1v-28zM583 768v32h1v-32zM584 771v31h1v-31zM585 771v41h1v-41zM586 770v41h1v-41zM587 767v34h1v-34zM588 777v28h1v-28zM589 770v29h1v-29zM590 773v38h1v-38zM591 773v31h1v-31zM592 768v32h1v-32zM593 772v29h1v-29zM594 772v28h1v-28zM595 766v35h1v-35zM596 771v33h1v-33zM597 771v29h1v-29zM598 773v28h1v-28zM599 771v32h1v-32zM600 766v32h1v-32zM601 768v36h1v-36zM602 773v28h1v-28zM603 774v26h1v-26zM604 776v23h1v-23zM605 773v28h1v-28zM606 768v33h1v-33zM607 772v28h1v-28zM608 774v28h1v-28zM609 769v31h1v-31zM610 773v28h1v-28zM611 771v25h1v-25zM612 768v30h1v-30zM613 772v39h1v-39zM614 769v29h1v-29zM615 771v27h1v-27zM616 770v29h1v-29zM617 773v26h1v-26zM618 766v33h1v-33zM619 771v28h1v-28zM620 772v28h1v-28zM621 768v44h1v-44zM622 771v33h1v-33zM623 773v29h1v-29zM624 771v30h1v-30zM625 773v38h1v-38zM626 772v28h1v-28zM627 772v29h1v-29zM628 772v29h1v-29zM629 767v40h1v-40zM630 770v36h1v-36zM631 774v33h1v-33zM632 770v32h1v-32zM633 769v39h1v-39zM634 769v34h1v-34zM635 768v40h1v-40zM636 772v31h1v-31zM637 773v35h1v-35zM638 773v29h1v-29zM639 766v30h1v-30zM640 773v33h1v-33zM641 769v41h1v-41zM642 771v28h1v-28zM643 773v36h1v-36zM644 769v34h1v-34zM645 774v22h1v-22zM646 772v35h1v-35zM647 769v35h1v-35zM648 774v31h1v-31zM649 770v32h1v-32zM650 766v43h1v-43zM651 777v29h1v-29zM652 773v35h1v-35zM653 773v29h1v-29zM654 772v32h1v-32zM655 769v34h1v-34zM656 772v32h1v-32zM657 770v38h1v-38zM658 772v30h1v-30zM659 771v38h1v-38zM660 771v32h1v-32zM661 767v37h1v-37zM662 772v35h1v-35zM663 771v33h1v-33zM664 766v42h1v-42zM665 766v45h1v-45zM666 766v42h1v-42zM667 769v38h1v-38zM668 771v33h1v-33zM669 770v35h1v-35zM670 772v32h1v-32zM671 771v34h1v-34zM672 772v34h1v-34zM673 769v39h1v-39zM674 769v42h1v-42zM675 766v36h1v-36zM676 777v28h1v-28zM677 766v35h1v-35zM678 766v40h1v-40zM679 772v31h1v-31zM680 766v32h1v-32zM681 773v31h1v-31zM682 770v30h1v-30zM683 766v42h1v-42zM684 770v34h1v-34zM685 772v28h1v-28zM686 770v30h1v-30zM687 769v38h1v-38zM688 773v26h1v-26zM689 778v22h1v-22zM690 772v35h1v-35zM691 773v32h1v-32zM692 771v40h1v-40zM693 772v28h1v-28zM694 771v34h1v-34zM695 773v26h1v-26zM696 771v26h1v-26zM697 767v36h1v-36zM698 771v29h1v-29zM699 770v29h1v-29zM700 771v31h1v-31zM701 769v34h1v-34zM702 772v37h1v-37zM703 778v34h1v-34zM704 772v36h1v-36zM705 767v45h1v-45zM706 769v31h1v-31zM707 769v43h1v-43zM708 771v25h1v-25zM709 766v33h1v-33zM710 772v27h1v-27zM711 767v45h1v-45zM712 774v27h1v-27zM713 766v44h1v-44zM714 772v29h1v-29zM715 777v28h1v-28zM716 769v32h1v-32zM717 771v29h1v-29zM718 773v34h1v-34zM719 778v26h1v-26zM720 769v37h1v-37zM721 766v36h1v-36zM722 773v29h1v-29zM723 772v35h1v-35zM724 775v22h1v-22zM725 768v32h1v-32zM726 770v41h1v-41zM727 768v37h1v-37zM728 766v45h1v-45zM729 772v37h1v-37zM730 774v28h1v-28zM731 774v25h1v-25zM732 769v27h1v-27zM733 773v33h1v-33zM734 773v37h1v-37zM735 773v28h1v-28zM736 769v33h1v-33zM737 773v29h1v-29zM738 772v30h1v-30zM739 766v42h1v-42zM740 766v38h1v-38zM741 773v31h1v-31zM742 773v30h1v-30zM743 772v34h1v-34zM744 772v37h1v-37zM745 772v29h1v-29zM746 773v30h1v-30zM747 772v26h1v-26zM748 773v30h1v-30zM749 770v35h1v-35zM750 768v34h1v-34zM751 767v44h1v-44zM752 776v28h1v-28zM753 772v31h1v-31zM754 770v31h1v-31zM755 772v37h1v-37zM756 773v25h1v-25zM757 771v34h1v-34zM758 767v35h1v-35zM759 773v29h1v-29zM760 768v38h1v-38zM761 772v38h1v-38zM762 767v42h1v-42zM763 766v39h1v-39zM764 769v31h1v-31zM765 773v34h1v-34zM766 770v32h1v-32zM767 769v33h1v-33zM768 773v37h1v-37zM769 773v31h1v-31zM770 772v35h1v-35zM771 772v30h1v-30zM772 770v40h1v-40zM773 766v38h1v-38zM774 767v40h1v-40zM775 766v36h1v-36zM776 777v31h1v-31zM777 778v32h1v-32zM778 771v39h1v-39zM779 772v30h1v-30zM780 766v32h1v-32zM781 771v35h1v-35zM782 766v37h1v-37zM783 768v30h1v-30zM784 768v31h1v-31zM785 772v39h1v-39zM786 771v40h1v-40zM787 769v35h1v-35zM788 769v32h1v-32zM789 769v39h1v-39zM790 766v45h1v-45zM791 768v43h1v-43zM792 769v41h1v-41zM793 772v33h1v-33zM794 769v33h1v-33zM795 773v27h1v-27zM796 773v26h1v-26zM797 772v25h1v-25zM798 766v35h1v-35zM799 774v27h1v-27zM800 766v43h1v-43zM801 769v34h1v-34zM802 770v36h1v-36zM803 770v32h1v-32zM804 774v33h1v-33zM805 776v26h1v-26zM806 772v35h1v-35zM807 774v28h1v-28zM808 774v33h1v-33zM809 774v33h1v-33zM810 770v30h1v-30zM811 772v29h1v-29zM812 769v30h1v-30zM813 774v32h1v-32zM814 770v36h1v-36zM815 773v23h1v-23zM816 773v28h1v-28zM817 771v35h1v-35zM818 766v36h1v-36zM819 771v30h1v-30zM820 777v30h1v-30zM821 772v39h1v-39zM822 772v28h1v-28zM823 767v34h1v-34zM824 772v29h1v-29zM825 770v30h1v-30zM826 773v34h1v-34zM827 766v35h1v-35zM828 767v36h1v-36zM829 769v34h1v-34zM830 766v45h1v-45zM831 773v29h1v-29zM832 773v32h1v-32zM833 772v40h1v-40zM834 773v34h1v-34zM835 767v36h1v-36zM836 772v33h1v-33zM837 773v29h1v-29zM838 767v37h1v-37zM839 766v35h1v-35zM840 772v31h1v-31zM841 766v38h1v-38zM842 771v37h1v-37zM843 770v36h1v-36zM844 769v35h1v-35zM845 777v24h1v-24zM846 772v31h1v-31zM847 768v36h1v-36zM848 769v32h1v-32zM849 771v30h1v-30zM850 766v35h1v-35zM851 773v28h1v-28zM852 766v42h1v-42zM853 769v43h1v-43zM854 766v33h1v-33zM855 773v28h1v-28zM856 771v38h1v-38zM857 766v43h1v-43zM858 777v30h1v-30zM859 768v37h1v-37zM860 771v38h1v-38zM861 772v40h1v-40zM862 772v36h1v-36zM863 770v40h1v-40zM864 770v33h1v-33zM865 766v41h1v-41zM866 772v37h1v-37zM867 766v42h1v-42zM868 769v43h1v-43zM869 772v37h1v-37zM870 769v33h1v-33zM871 771v33h1v-33zM872 770v38h1v-38zM873 766v38h1v-38zM874 773v37h1v-37zM875 771v28h1v-28zM876 773v31h1v-31zM877 767v34h1v-34zM878 771v31h1v-31zM879 772v36h1v-36zM880 769v36h1v-36zM881 768v38h1v-38zM882 769v39h1v-39zM883 772v28h1v-28zM884 772v31h1v-31zM885 772v36h1v-36zM886 772v38h1v-38zM887 771v32h1v-32zM888 771v32h1v-32zM889 773v23h1v-23zM890 766v37h1v-37zM891 768v28h1v-28zM892 768v43h1v-43zM893 769v31h1v-31zM894 768v34h1v-34zM895 766v40h1v-40zM896 770v32h1v-32zM897 767v42h1v-42zM898 771v32h1v-32zM899 773v32h1v-32zM900 771v39h1v-39zM901 769v29h1v-29zM902 772v35h1v-35zM903 771v25h1v-25zM904 773v32h1v-32zM905 773v28h1v-28zM906 766v35h1v-35zM907 766v38h1v-38zM908 769v36h1v-36zM909 770v40h1v-40zM910 773v31h1v-31zM911 773v28h1v-28zM912 771v40h1v-40zM913 770v32h1v-32zM914 772v27h1v-27zM915 766v41h1v-41zM916 773v25h1v-25zM917 778v26h1v-26zM918 770v35h1v-35zM919 774v36h1v-36zM920 768v32h1v-32zM921 768v35h1v-35zM922 772v28h1v-28zM923 773v29h1v-29zM924 772v28h1v-28zM925 774v33h1v-33zM926 770v36h1v-36zM927 773v28h1v-28zM928 774v32h1v-32zM929 773v39h1v-39zM930 768v39h1v-39zM931 770v33h1v-33zM932 768v39h1v-39zM933 768v33h1v-33zM934 772v35h1v-35zM935 772v29h1v-29zM936 770v32h1v-32zM937 770v35h1v-35zM938 773v31h1v-31zM939 770v33h1v-33zM940 771v33h1v-33zM941 774v25h1v-25zM942 773v30h1v-30zM943 775v24h1v-24zM944 774v29h1v-29zM945 777v23h1v-23zM946 777v21h1v-21zM947 779v19h1v-19zM948 778v20h1v-20zM949 779v17h1v-17zM950 781v15h1v-15zM951 781v15h1v-15zM952 780v14h1v-14zM953 781v13h1v-13zM954 782v12h1v-12zM955 783v11h1v-11zM956 784v10h1v-10zM957 784v9h1v-9zM958 784v8h1v-8zM959 784v7h1v-7zM960 785v6h1v-6zM961 786v6h1v-6zM962 786v5h1v-5zM963 787v4h1v-4zM964 787v3h1v-3zM965 787v3h1v-3zM966 787v3h1v-3zM967 788v1h1v-1zM968 788v1h1v-1zM969 788v1h1v-1zM970 788v1h1v-1zM971 788v1h1v-1zM972 788v1h1v-1zM973 788v1h1v-1zM974 788v1h1v-1zM975 788v1h1v-1zM976 788v1h1v-1zM977 788v1h1v-1zM978 788v1h1v-1zM979 788v1h1v-1zM980 788v1h1v-1zM981 788v1h1v-1zM982 788v1h1v-1zM983 788v1h1v-1zM984 788v1h1v-1zM985 788v1h1v-1z"/><path fill="#00008b" d="M2 834v3h1v-3zM3 833v5h1v-5zM4 833v4h1v-4zM5 833v5h1v-5zM6 833v5h1v-5zM7 833v4h1v-4zM8 834v3h1v-3zM9 833v5h1v-5zM10 833v4h1v-4zM11 834v3h1v-3zM12 833v5h1v-5zM13 833v4h1v-4zM14 834v3h1v-3zM15 834v3h1v-3zM16 833v4h1v-4zM17 834v3h1v-3zM18 833v4h1v-4zM19 833v4h1v-4zM20 833v5h1v-5zM21 833v5h1v-5zM22 834v3h1v-3zM23 833v5h1v-5zM24 833v5h1v-5zM25 833v5h1v-5zM26 833v5h1v-5zM27 834v3h1v-3zM28 834v3h1v-3zM29 833v5h1v-5zM30 833v4h1v-4zM31 834v3h1v-3zM32 833v4h1v-4zM33 833v5h1v-5zM34 833v5h1v-5zM35 833v5h1v-5zM36 834v3h1v-3zM37 833v4h1v-4zM38 833v4h1v-4zM39 834v3h1v-3zM40 834v3h1v-3zM41 832v7h1v-7zM42 830v12h1v-12zM43 830v12h1v-12zM44 831v9h1v-9zM45 832v8h1v-8zM46 830v11h1v-11zM47 832v6h1v-6zM48 830v11h1v-11zM49 831v10h1v-10zM50 832v7h1v-7zM51 831v9h1v-9zM52 831v8h1v-8zM53 830v10h1v-10zM54 831v10h1v-10zM55 832v7h1v-7zM56 831v8h1v-8zM57 832v7h1v-7zM58 832v7h1v-7zM59 831v8h1v-8zM60 831v10h1v-10zM61 830v10h1v-10zM62 832v7h1v-7zM63 831v9h1v-9zM64 831v8h1v-8zM65 832v7h1v-7zM66 831v8h1v-8zM67 831v9h1v-9zM68 831v9h1v-9zM69 830v9h1v-9zM70 832v7h1v-7zM71 831v8h1v-8zM72 831v8h1v-8zM73 831v7h1v-7zM74 830v10h1v-10zM75 830v10h1v-10zM76 831v9h1v-9zM77 832v7h1v-7zM78 832v8h1v-8zM79 831v10h1v-10zM80 830v10h1v-10zM81 831v10h1v-10zM82 832v6h1v-6zM83 831v8h1v-8zM84 832v6h1v-6zM85 830v10h1v-10zM86 832v6h1v-6zM87 831v8h1v-8zM88 831v8h1v-8zM89 831v8h1v-8zM90 830v9h1v-9zM91 830v10h1v-10zM92 832v7h1v-7zM93 831v9h1v-9zM94 832v7h1v-7zM95 831v9h1v-9zM96 831v9h1v-9zM97 831v9h1v-9zM98 831v8h1v-8zM99 831v9h1v-9zM100 832v7h1v-7zM101 831v8h1v-8zM102 831v9h1v-9zM103 833v5h1v-5zM104 833v5h1v-5zM105 833v5h1v-5zM106 833v5h1v-5zM107 833v5h1v-5zM108 833v5h1v-5zM109 833v4h1v-4zM110 834v3h1v-3zM111 834v3h1v-3zM112 834v3h1v-3zM113 834v2h1v-2zM114 834v3h1v-3zM115 834v3h1v-3zM116 834v2h1v-2zM117 834v2h1v-2zM118 834v2h1v-2zM119 834v3h1v-3zM120 834v2h1v-2zM121 834v2h1v-2zM122 826v21h1v-21zM123 824v23h1v-23zM124 825v23h1v-23zM125 821v27h1v-27zM126 821v29h1v-29zM127 819v35h1v-35zM128 819v41h1v-41zM129 819v31h1v-31zM130 817v43h1v-43zM131 819v31h1v-31zM132 824v24h1v-24zM133 819v31h1v-31zM134 819v32h1v-32zM135 815v36h1v-36zM136 813v36h1v-36zM137 819v36h1v-36zM138 824v33h1v-33zM139 816v32h1v-32zM140 813v41h1v-41zM141 821v38h1v-38zM142 821v35h1v-35zM143 813v41h1v-41zM144 813v35h1v-35zM145 820v32h1v-32zM146 820v40h1v-40zM147 820v32h1v-32zM148 815v35h1v-35zM149 820v36h1v-36zM150 813v40h1v-40zM151 817v29h1v-29zM152 818v42h1v-42zM153 818v34h1v-34zM154 817v36h1v-36zM155 814v39h1v-39zM156 814v44h1v-44zM157 818v34h1v-34zM158 819v32h1v-32zM159 819v37h1v-37zM160 823v37h1v-37zM161 825v25h1v-25zM162 815v40h1v-40zM163 824v36h1v-36zM164 815v41h1v-41zM165 818v34h1v-34zM166 816v38h1v-38zM167 813v39h1v-39zM168 816v39h1v-39zM169 813v38h1v-38zM170 816v41h1v-41zM171 814v44h1v-44zM172 813v32h1v-32zM173 814v37h1v-37zM174 819v32h1v-32zM175 817v26h1v-26zM176 819v36h1v-36zM177 818v29h1v-29zM178 818v32h1v-32zM179 813v39h1v-39zM180 817v30h1v-30zM181 816v40h1v-40zM182 817v35h1v-35zM183 816v44h1v-44zM184 815v38h1v-38zM185 824v23h1v-23zM186 817v32h1v-32zM187 818v32h1v-32zM188 820v32h1v-32zM189 818v42h1v-42zM190 821v35h1v-35zM191 820v29h1v-29zM192 821v35h1v-35zM193 820v27h1v-27zM194 821v34h1v-34zM195 820v36h1v-36zM196 816v37h1v-37zM197 816v41h1v-41zM198 816v44h1v-44zM199 813v36h1v-36zM200 813v31h1v-31zM201 815v45h1v-45zM202 817v37h1v-37zM203 819v29h1v-29zM204 816v36h1v-36zM205 819v32h1v-32zM206 818v35h1v-35zM207 819v35h1v-35zM208 817v38h1v-38zM209 819v30h1v-30zM210 815v32h1v-32zM211 815v31h1v-31zM212 820v33h1v-33zM213 817v29h1v-29zM214 818v37h1v-37zM215 821v29h1v-29zM216 820v29h1v-29zM217 820v28h1v-28zM218 813v35h1v-35zM219 816v33h1v-33zM220 821v27h1v-27zM221 813v37h1v-37zM222 813v39h1v-39zM223 820v30h1v-30zM224 818v33h1v-33zM225 819v31h1v-31zM226 821v24h1v-24zM227 817v38h1v-38zM228 817v34h1v-34zM229 813v33h1v-33zM230 817v34h1v-34zM231 825v24h1v-24zM232 817v38h1v-38zM233 820v33h1v-33zM234 819v30h1v-30zM235 816v28h1v-28zM236 819v38h1v-38zM237 817v28h1v-28zM238 823v37h1v-37zM239 813v36h1v-36zM240 819v33h1v-33zM241 816v34h1v-34zM242 818v30h1v-30zM243 819v35h1v-35zM244 817v36h1v-36zM245 813v41h1v-41zM246 817v43h1v-43zM247 819v36h1v-36zM248 814v36h1v-36zM249 814v35h1v-35zM250 813v45h1v-45zM251 816v44h1v-44zM252 818v27h1v-27zM253 815v40h1v-40zM254 820v28h1v-28zM255 825v35h1v-35zM256 814v42h1v-42zM257 817v28h1v-28zM258 824v27h1v-27zM259 818v36h1v-36zM260 815v38h1v-38zM261 818v41h1v-41zM262 823v29h1v-29zM263 818v41h1v-41zM264 817v34h1v-34zM265 819v39h1v-39zM266 820v36h1v-36zM267 818v40h1v-40zM268 817v37h1v-37zM269 818v33h1v-33zM270 820v29h1v-29zM271 813v37h1v-37zM272 813v37h1v-37zM273 820v34h1v-34zM274 816v44h1v-44zM275 813v34h1v-34zM276 818v28h1v-28zM277 819v38h1v-38zM278 817v33h1v-33zM279 819v38h1v-38zM280 818v26h1v-26zM281 820v30h1v-30zM282 817v32h1v-32zM283 815v34h1v-34zM284 819v36h1v-36zM285 815v36h1v-36zM286 817v34h1v-34zM287 817v35h1v-35zM288 813v40h1v-40zM289 820v30h1v-30zM290 819v31h1v-31zM291 813v47h1v-47zM292 816v37h1v-37zM293 820v29h1v-29zM294 818v33h1v-33zM295 817v42h1v-42zM296 813v45h1v-45zM297 819v39h1v-39zM298 819v41h1v-41zM299 823v29h1v-29zM300 822v28h1v-28zM301 821v39h1v-39zM302 821v32h1v-32zM303 821v29h1v-29zM304 822v27h1v-27zM305 819v28h1v-28zM306 813v37h1v-37zM307 817v31h1v-31zM308 820v27h1v-27zM309 821v29h1v-29zM310 820v34h1v-34zM311 823v37h1v-37zM312 819v31h1v-31zM313 816v30h1v-30zM314 813v47h1v-47zM315 819v34h1v-34zM316 819v31h1v-31zM317 820v33h1v-33zM318 817v33h1v-33zM319 820v36h1v-36zM320 819v35h1v-35zM321 813v35h1v-35zM322 818v30h1v-30zM323 819v34h1v-34zM324 815v33h1v-33zM325 824v32h1v-32zM326 820v32h1v-32zM327 819v36h1v-36zM328 819v30h1v-30zM329 815v41h1v-41zM330 813v47h1v-47zM331 820v36h1v-36zM332 819v27h1v-27zM333 813v44h1v-44zM334 813v36h1v-36zM335 819v33h1v-33zM336 815v33h1v-33zM337 817v31h1v-31zM338 817v43h1v-43zM339 816v41h1v-41zM340 814v40h1v-40zM341 816v44h1v-44zM342 815v35h1v-35zM343 820v28h1v-28zM344 816v44h1v-44zM345 820v30h1v-30zM346 813v40h1v-40zM347 819v31h1v-31zM348 819v41h1v-41zM349 820v35h1v-35zM350 816v36h1v-36zM351 820v32h1v-32zM352 819v31h1v-31zM353 814v38h1v-38zM354 820v40h1v-40zM355 824v21h1v-21zM356 817v34h1v-34zM357 817v27h1v-27zM358 813v41h1v-41zM359 819v38h1v-38zM360 814v45h1v-45zM361 820v38h1v-38zM362 813v41h1v-41zM363 814v46h1v-46zM364 815v28h1v-28zM365 815v39h1v-39zM366 820v40h1v-40zM367 814v33h1v-33zM368 818v42h1v-42zM369 818v37h1v-37zM370 816v39h1v-39zM371 817v42h1v-42zM372 820v35h1v-35zM373 815v38h1v-38zM374 820v36h1v-36zM375 818v30h1v-30zM376 823v30h1v-30zM377 813v36h1v-36zM378 813v39h1v-39zM379 821v28h1v-28zM380 825v23h1v-23zM381 816v35h1v-35zM382 813v40h1v-40zM383 818v41h1v-41zM384 816v33h1v-33zM385 817v39h1v-39zM386 819v35h1v-35zM387 821v29h1v-29zM388 817v39h1v-39zM389 821v29h1v-29zM390 821v38h1v-38zM391 822v34h1v-34zM392 816v36h1v-36zM393 817v36h1v-36zM394 817v33h1v-33zM395 821v34h1v-34zM396 815v44h1v-44zM397 816v44h1v-44zM398 813v39h1v-39zM399 819v27h1v-27zM400 820v30h1v-30zM401 821v27h1v-27zM402 815v36h1v-36zM403 813v36h1v-36zM404 820v34h1v-34zM405 819v29h1v-29zM406 814v31h1v-31zM407 813v41h1v-41zM408 818v37h1v-37zM409 820v27h1v-27zM410 813v36h1v-36zM411 818v33h1v-33zM412 815v32h1v-32zM413 818v31h1v-31zM414 816v29h1v-29zM415 820v33h1v-33zM416 813v37h1v-37zM417 820v27h1v-27zM418 815v28h1v-28zM419 819v27h1v-27zM420 821v31h1v-31zM421 813v35h1v-35zM422 815v41h1v-41zM423 813v40h1v-40zM424 813v47h1v-47zM425 816v33h1v-33zM426 821v32h1v-32zM427 813v47h1v-47zM428 820v38h1v-38zM429 819v32h1v-32zM430 818v28h1v-28zM431 818v38h1v-38zM432 818v34h1v-34zM433 820v36h1v-36zM434 817v31h1v-31zM435 817v31h1v-31zM436 820v40h1v-40zM437 817v39h1v-39zM438 813v38h1v-38zM439 818v25h1v-25zM440 817v43h1v-43zM441 819v28h1v-28zM442 814v31h1v-31zM443 818v25h1v-25zM444 814v46h1v-46zM445 813v37h1v-37zM446 815v32h1v-32zM447 819v34h1v-34zM448 817v32h1v-32zM449 818v36h1v-36zM450 819v30h1v-30zM451 819v28h1v-28zM452 817v37h1v-37zM453 818v39h1v-39zM454 813v35h1v-35zM455 816v34h1v-34zM456 817v39h1v-39zM457 815v32h1v-32zM458 818v42h1v-42zM459 818v33h1v-33zM460 815v45h1v-45zM461 820v34h1v-34zM462 815v33h1v-33zM463 819v34h1v-34zM464 820v30h1v-30zM465 821v37h1v-37zM466 818v32h1v-32zM467 815v42h1v-42zM468 817v40h1v-40zM469 820v37h1v-37zM470 813v38h1v-38zM471 816v37h1v-37zM472 820v32h1v-32zM473 813v38h1v-38zM474 821v33h1v-33zM475 819v32h1v-32zM476 824v25h1v-25zM477 820v37h1v-37zM478 820v34h1v-34zM479 818v26h1v-26zM480 820v29h1v-29zM481 820v29h1v-29zM482 816v38h1v-38zM483 821v30h1v-30zM484 816v41h1v-41zM485 820v30h1v-30zM486 815v45h1v-45zM487 818v36h1v-36zM488 820v30h1v-30zM489 818v33h1v-33zM490 819v31h1v-31zM491 825v27h1v-27zM492 813v40h1v-40zM493 818v42h1v-42zM494 820v31h1v-31zM495 813v38h1v-38zM496 821v29h1v-29zM497 813v40h1v-40zM498 821v36h1v-36zM499 818v32h1v-32zM500 817v41h1v-41zM501 817v38h1v-38zM502 816v34h1v-34zM503 819v31h1v-31zM504 821v26h1v-26zM505 821v33h1v-33zM506 816v35h1v-35zM507 821v32h1v-32zM508 821v26h1v-26zM509 817v37h1v-37zM510 819v34h1v-34zM511 820v28h1v-28zM512 819v28h1v-28zM513 821v26h1v-26zM514 821v27h1v-27zM515 819v41h1v-41zM516 818v31h1v-31zM517 820v25h1v-25zM518 819v36h1v-36zM519 817v33h1v-33zM520 816v32h1v-32zM521 814v33h1v-33zM522 816v29h1v-29zM523 816v35h1v-35zM524 814v38h1v-38zM525 819v34h1v-34zM526 819v37h1v-37zM527 818v36h1v-36zM528 819v34h1v-34zM529 813v42h1v-42zM530 818v31h1v-31zM531 815v45h1v-45zM532 817v34h1v-34zM533 819v36h1v-36zM534 814v34h1v-34zM535 817v39h1v-39zM536 816v37h1v-37zM537 819v36h1v-36zM538 813v39h1v-39zM539 818v29h1v-29zM540 815v33h1v-33zM541 813v47h1v-47zM542 819v37h1v-37zM543 818v29h1v-29zM544 819v28h1v-28zM545 813v47h1v-47zM546 820v33h1v-33zM547 818v31h1v-31zM548 819v30h1v-30zM549 815v38h1v-38zM550 816v44h1v-44zM551 819v32h1v-32zM552 813v36h1v-36zM553 819v38h1v-38zM554 821v39h1v-39zM555 820v40h1v-40zM556 816v33h1v-33zM557 813v37h1v-37zM558 813v37h1v-37zM559 817v34h1v-34zM560 813v42h1v-42zM561 818v35h1v-35zM562 820v30h1v-30zM563 818v36h1v-36zM564 815v38h1v-38zM565 819v33h1v-33zM566 819v36h1v-36zM567 819v39h1v-39zM568 819v32h1v-32zM569 816v44h1v-44zM570 818v31h1v-31zM571 819v30h1v-30zM572 819v35h1v-35zM573 820v30h1v-30zM574 820v38h1v-38zM575 820v40h1v-40zM576 816v34h1v-34zM577 816v33h1v-33zM578 821v28h1v-28zM579 820v29h1v-29zM580 821v31h1v-31zM581 821v26h1v-26zM582 820v32h1v-32zM583 813v39h1v-39zM584 820v30h1v-30zM585 817v33h1v-33zM586 821v38h1v-38zM587 819v33h1v-33zM588 818v32h1v-32zM589 822v34h1v-34zM590 818v28h1v-28zM591 822v24h1v-24zM592 821v38h1v-38zM593 821v32h1v-32zM594 813v31h1v-31zM595 821v23h1v-23zM596 825v25h1v-25zM597 821v33h1v-33zM598 820v39h1v-39zM599 819v41h1v-41zM600 819v37h1v-37zM601 813v41h1v-41zM602 817v43h1v-43zM603 816v31h1v-31zM604 813v36h1v-36zM605 820v32h1v-32zM606 817v33h1v-33zM607 819v29h1v-29zM608 815v41h1v-41zM609 813v42h1v-42zM610 817v40h1v-40zM611 817v34h1v-34zM612 814v38h1v-38zM613 820v28h1v-28zM614 820v32h1v-32zM615 824v29h1v-29zM616 817v32h1v-32zM617 815v36h1v-36zM618 820v31h1v-31zM619 818v30h1v-30zM620 820v29h1v-29zM621 816v44h1v-44zM622 820v34h1v-34zM623 818v31h1v-31zM624 813v37h1v-37zM625 814v44h1v-44zM626 817v35h1v-35zM627 815v33h1v-33zM628 816v38h1v-38zM629 813v35h1v-35zM630 817v40h1v-40zM631 820v34h1v-34zM632 820v36h1v-36zM633 819v31h1v-31zM634 813v35h1v-35zM635 814v39h1v-39zM636 815v35h1v-35zM637 819v28h1v-28zM638 815v45h1v-45zM639 813v33h1v-33zM640 817v33h1v-33zM641 813v42h1v-42zM642 816v40h1v-40zM643 820v30h1v-30zM644 816v33h1v-33zM645 818v36h1v-36zM646 824v32h1v-32zM647 825v22h1v-22zM648 818v34h1v-34zM649 816v30h1v-30zM650 816v40h1v-40zM651 820v35h1v-35zM652 819v41h1v-41zM653 819v33h1v-33zM654 819v30h1v-30zM655 813v36h1v-36zM656 819v36h1v-36zM657 820v34h1v-34zM658 815v32h1v-32zM659 819v30h1v-30zM660 819v38h1v-38zM661 819v33h1v-33zM662 816v36h1v-36zM663 817v40h1v-40zM664 821v39h1v-39zM665 821v30h1v-30zM666 821v36h1v-36zM667 819v33h1v-33zM668 817v34h1v-34zM669 824v27h1v-27zM670 816v33h1v-33zM671 818v42h1v-42zM672 821v31h1v-31zM673 816v37h1v-37zM674 820v33h1v-33zM675 820v35h1v-35zM676 822v34h1v-34zM677 820v38h1v-38zM678 820v30h1v-30zM679 815v40h1v-40zM680 816v35h1v-35zM681 818v27h1v-27zM682 821v32h1v-32zM683 817v43h1v-43zM684 818v42h1v-42zM685 816v44h1v-44zM686 825v25h1v-25zM687 820v34h1v-34zM688 817v29h1v-29zM689 820v40h1v-40zM690 813v37h1v-37zM691 816v39h1v-39zM692 819v39h1v-39zM693 819v34h1v-34zM694 820v34h1v-34zM695 818v33h1v-33zM696 819v33h1v-33zM697 818v27h1v-27zM698 815v45h1v-45zM699 823v33h1v-33zM700 816v44h1v-44zM701 820v35h1v-35zM702 815v36h1v-36zM703 817v39h1v-39zM704 820v36h1v-36zM705 817v28h1v-28zM706 813v36h1v-36zM707 813v38h1v-38zM708 821v27h1v-27zM709 817v29h1v-29zM710 819v37h1v-37zM711 816v34h1v-34zM712 821v27h1v-27zM713 815v45h1v-45zM714 819v28h1v-28zM715 820v35h1v-35zM716 824v26h1v-26zM717 813v47h1v-47zM718 819v39h1v-39zM719 817v29h1v-29zM720 817v38h1v-38zM721 813v41h1v-41zM722 814v36h1v-36zM723 815v40h1v-40zM724 817v32h1v-32zM725 818v33h1v-33zM726 825v23h1v-23zM727 816v33h1v-33zM728 813v41h1v-41zM729 813v41h1v-41zM730 819v28h1v-28zM731 814v34h1v-34zM732 817v36h1v-36zM733 818v42h1v-42zM734 819v29h1v-29zM735 819v28h1v-28zM736 819v30h1v-30zM737 813v38h1v-38zM738 813v34h1v-34zM739 817v30h1v-30zM740 816v31h1v-31zM741 813v43h1v-43zM742 815v31h1v-31zM743 818v29h1v-29zM744 814v33h1v-33zM745 819v36h1v-36zM746 819v30h1v-30zM747 824v26h1v-26zM748 818v31h1v-31zM749 820v27h1v-27zM750 820v32h1v-32zM751 820v37h1v-37zM752 816v32h1v-32zM753 820v30h1v-30zM754 821v27h1v-27zM755 821v22h1v-22zM756 816v39h1v-39zM757 820v31h1v-31zM758 819v30h1v-30zM759 819v29h1v-29zM760 819v34h1v-34zM761 821v29h1v-29zM762 820v35h1v-35zM763 818v40h1v-40zM764 820v35h1v-35zM765 817v43h1v-43zM766 813v39h1v-39zM767 816v29h1v-29zM768 821v35h1v-35zM769 819v31h1v-31zM770 815v33h1v-33zM771 815v33h1v-33zM772 819v26h1v-26zM773 819v41h1v-41zM774 819v37h1v-37zM775 819v31h1v-31zM776 819v31h1v-31zM777 818v31h1v-31zM778 819v33h1v-33zM779 818v30h1v-30zM780 816v36h1v-36zM781 816v38h1v-38zM782 813v39h1v-39zM783 813v43h1v-43zM784 823v31h1v-31zM785 824v35h1v-35zM786 819v35h1v-35zM787 823v28h1v-28zM788 820v26h1v-26zM789 818v37h1v-37zM790 819v34h1v-34zM791 821v32h1v-32zM792 813v39h1v-39zM793 813v44h1v-44zM794 821v36h1v-36zM795 816v37h1v-37zM796 820v39h1v-39zM797 819v32h1v-32zM798 813v42h1v-42zM799 816v39h1v-39zM800 817v38h1v-38zM801 819v31h1v-31zM802 819v31h1v-31zM803 820v38h1v-38zM804 817v33h1v-33zM805 815v45h1v-45zM806 814v44h1v-44zM807 818v37h1v-37zM808 817v31h1v-31zM809 818v38h1v-38zM810 817v36h1v-36zM811 817v37h1v-37zM812 813v37h1v-37zM813 816v31h1v-31zM814 813v43h1v-43zM815 817v37h1v-37zM816 817v36h1v-36zM817 817v32h1v-32zM818 823v31h1v-31zM819 817v33h1v-33zM820 819v31h1v-31zM821 818v35h1v-35zM822 816v33h1v-33zM823 819v36h1v-36zM824 816v34h1v-34zM825 814v37h1v-37zM826 813v42h1v-42zM827 819v41h1v-41zM828 815v36h1v-36zM829 816v28h1v-28zM830 818v33h1v-33zM831 820v35h1v-35zM832 819v30h1v-30zM833 819v30h1v-30zM834 816v32h1v-32zM835 821v35h1v-35zM836 821v27h1v-27zM837 815v32h1v-32zM838 821v30h1v-30zM839 820v33h1v-33zM840 820v27h1v-27zM841 817v38h1v-38zM842 818v26h1v-26zM843 820v30h1v-30zM844 817v29h1v-29zM845 818v31h1v-31zM846 815v30h1v-30zM847 813v34h1v-34zM848 818v29h1v-29zM849 820v27h1v-27zM850 820v27h1v-27zM851 815v34h1v-34zM852 820v29h1v-29zM853 825v27h1v-27zM854 813v43h1v-43zM855 813v33h1v-33zM856 817v40h1v-40zM857 816v41h1v-41zM858 815v36h1v-36zM859 825v32h1v-32zM860 816v42h1v-42zM861 819v38h1v-38zM862 820v30h1v-30zM863 824v22h1v-22zM864 818v34h1v-34zM865 815v43h1v-43zM866 821v28h1v-28zM867 821v39h1v-39zM868 820v33h1v-33zM869 818v36h1v-36zM870 813v36h1v-36zM871 821v29h1v-29zM872 820v31h1v-31zM873 813v32h1v-32zM874 821v33h1v-33zM875 818v30h1v-30zM876 821v39h1v-39zM877 820v30h1v-30zM878 813v35h1v-35zM879 821v28h1v-28zM880 824v36h1v-36zM881 820v33h1v-33zM882 818v33h1v-33zM883 819v33h1v-33zM884 819v39h1v-39zM885 819v33h1v-33zM886 824v31h1v-31zM887 817v26h1v-26zM888 815v41h1v-41zM889 813v39h1v-39zM890 819v41h1v-41zM891 820v28h1v-28zM892 819v31h1v-31zM893 813v43h1v-43zM894 819v32h1v-32zM895 815v36h1v-36zM896 814v39h1v-39zM897 814v46h1v-46zM898 818v41h1v-41zM899 819v41h1v-41zM900 817v39h1v-39zM901 819v32h1v-32zM902 814v42h1v-42zM903 825v31h1v-31zM904 816v38h1v-38zM905 820v35h1v-35zM906 816v44h1v-44zM907 816v44h1v-44zM908 819v37h1v-37zM909 816v37h1v-37zM910 818v35h1v-35zM911 816v42h1v-42zM912 823v34h1v-34zM913 813v38h1v-38zM914 816v39h1v-39zM915 818v40h1v-40zM916 819v35h1v-35zM917 816v34h1v-34zM918 819v32h1v-32zM919 820v31h1v-31zM920 815v40h1v-40zM921 813v41h1v-41zM922 819v36h1v-36zM923 820v34h1v-34zM924 819v34h1v-34zM925 818v42h1v-42zM926 818v37h1v-37zM927 813v37h1v-37zM928 819v32h1v-32zM929 817v35h1v-35zM930 815v45h1v-45zM931 813v47h1v-47zM932 814v41h1v-41zM933 819v30h1v-30zM934 818v34h1v-34zM935 824v31h1v-31zM936 815v41h1v-41zM937 814v43h1v-43zM938 816v42h1v-42zM939 819v37h1v-37zM940 821v33h1v-33zM941 822v29h1v-29zM942 821v26h1v-26zM943 821v30h1v-30zM944 823v24h1v-24zM945 822v26h1v-26zM946 825v21h1v-21zM947 823v22h1v-22zM948 826v19h1v-19zM949 825v21h1v-21zM950 827v18h1v-18zM951 828v14h1v-14zM952 828v15h1v-15zM953 829v12h1v-12zM954 828v13h1v-13zM955 830v10h1v-10zM956 831v9h1v-9zM957 831v9h1v-9zM958 831v9h1v-9zM959 832v7h1v-7zM960 832v7h1v-7zM961 833v6h1v-6zM962 833v5h1v-5zM963 833v4h1v-4zM964 834v3h1v-3zM965 834v3h1v-3zM966 835v1h1v-1zM967 835v1h1v-1zM968 835v1h1v-1zM969 835v1h1v-1zM970 835v1h1v-1zM971 835v1h1v-1zM972 835v1h1v-1zM973 835v1h1v-1zM974 835v1h1v-1zM975 835v1h1v-1zM976 835v1h1v-1zM977 835v1h1v-1zM978 835v1h1v-1zM979 835v1h1v-1zM980 835v1h1v-1zM981 835v1h1v-1zM982 835v1h1v-1zM983 835v1h1v-1zM984 835v1h1v-1zM985 835v1h1v-1z"/><rect x="392" y="764" width="1" height="96" fill="#00e0e0"/></svg>
<div class="b hd" style="left:986px;top:744px;width:236px;height:19px"></div>
<div class="t " style="left:985px;top:743px;font-size:14px;line-height:20px;color:#444;width:237px;text-align:center;">S&amp;M</div>
<div class="b" style="left:986px;top:765px;width:46px;height:16px;background:#111;background:linear-gradient(#181818,#0a0a0a)"></div>
<div class="t " style="left:986px;top:764px;font-size:12.5px;line-height:18px;color:#4a4a4a;width:46px;text-align:center;">KJ</div>
<div class="b" style="left:1034px;top:765px;width:46px;height:16px;background:#111;background:linear-gradient(#181818,#0a0a0a)"></div>
<div class="t " style="left:1034px;top:764px;font-size:12.5px;line-height:18px;color:#4a4a4a;width:46px;text-align:center;">Singer</div>
<div class="b" style="left:1082px;top:765px;width:46px;height:16px;background:#111;background:linear-gradient(#181818,#0a0a0a)"></div>
<div class="t " style="left:1082px;top:764px;font-size:12.5px;line-height:18px;color:#4a4a4a;width:46px;text-align:center;">Crowd</div>
<div class="b" style="left:1130px;top:765px;width:43px;height:16px;background:#111;background:linear-gradient(#181818,#0a0a0a)"></div>
<div class="t " style="left:1130px;top:764px;font-size:12.5px;line-height:18px;color:#4a4a4a;width:43px;text-align:center;">NSD</div>
<div class="b" style="left:1175px;top:765px;width:47px;height:16px;background:#111;background:linear-gradient(#181818,#0a0a0a)"></div>
<div class="t " style="left:1175px;top:764px;font-size:12.5px;line-height:18px;color:#4a4a4a;width:47px;text-align:center;">Scroller</div>
<div class="b" style="left:985px;top:782px;width:48px;height:39px;background:#0000cd;"></div>
<div class="t " style="left:985px;top:791px;font-size:13.6px;line-height:19px;color:#fff;width:48px;text-align:center;">Vid 1</div>
<div class="b" style="left:1033px;top:782px;width:48px;height:39px;background:#0000cd;"></div>
<div class="t " style="left:1033px;top:791px;font-size:13.6px;line-height:19px;color:#fff;width:48px;text-align:center;">Vid 2</div>
<div class="b" style="left:1129px;top:782px;width:46px;height:39px;background:#0000cd;"></div>
<div class="t " style="left:1129px;top:791px;font-size:13.6px;line-height:19px;color:#fff;width:46px;text-align:center;">NSD</div>
<div class="b" style="left:1175px;top:782px;width:48px;height:39px;background:#0000cd;"></div>
<div class="t " style="left:1175px;top:791px;font-size:13.6px;line-height:19px;color:#fff;width:48px;text-align:center;">Scr</div>
<div class="t " style="left:1082px;top:791px;font-size:13.6px;line-height:19px;color:#484848;width:48px;text-align:center;">Vid 3</div>
<div class="b" style="left:985px;top:821px;width:48px;height:38px;background:#111;background:linear-gradient(#151515,#020202)"></div>
<div class="b" style="left:1129px;top:821px;width:94px;height:38px;background:#0c0c0c;background:linear-gradient(#141414,#020202)"></div>
<svg style="left:0;top:0" width="1602" height="903"><path d="M1004.500 845l5-9 5 9z" fill="#555"/></svg>
<div class="t " style="left:1129px;top:831px;font-size:13.6px;line-height:19px;color:#484848;width:46px;text-align:center;">Edit</div>
<div class="t " style="left:1176px;top:831px;font-size:13.6px;line-height:19px;color:#484848;width:47px;text-align:center;">Edit</div>
<div class="b hd" style="left:1224px;top:744px;width:40px;height:19px"></div>
<div class="b hd" style="left:1266px;top:744px;width:36px;height:19px"></div>
<div class="t " style="left:1224px;top:743px;font-size:14px;line-height:20px;color:#444;width:40px;text-align:center;">MVol</div>
<div class="t " style="left:1266px;top:743px;font-size:14px;line-height:20px;color:#444;width:36px;text-align:center;">CPU</div>
<div class="b" style="left:1224px;top:847px;width:40px;height:9px;background:#111;background:linear-gradient(#151515,#0a0a0a)"></div>
<div class="b" style="left:1266px;top:856px;width:36px;height:3px;background:#0000e0;"></div>
<div class="b hd" style="left:1303px;top:744px;width:299px;height:19px"></div>
<div class="t " style="left:1303px;top:743px;font-size:14px;line-height:20px;color:#444;width:299px;text-align:center;">View</div>
<div class="t " style="left:1302px;top:765px;font-size:14.3px;line-height:20px;color:#484848;width:60px;text-align:center;">DJM</div>
<div class="b" style="left:1362px;top:764px;width:60px;height:24px;background:#0000cd;"></div>
<div class="t " style="left:1362px;top:765px;font-size:14.3px;line-height:20px;color:#fff;width:60px;text-align:center;">Vol</div>
<div class="t " style="left:1422px;top:765px;font-size:14.3px;line-height:20px;color:#484848;width:60px;text-align:center;">AVS</div>
<div class="t " style="left:1482px;top:765px;font-size:14.3px;line-height:20px;color:#484848;width:60px;text-align:center;">Pitch</div>
<div class="b" style="left:1542px;top:764px;width:60px;height:24px;background:#0000cd;"></div>
<div class="t " style="left:1362px;top:789px;font-size:14.3px;line-height:20px;color:#484848;width:60px;text-align:center;">SFX</div>
<div class="b" style="left:1422px;top:788px;width:60px;height:24px;background:#0000cd;"></div>
<div class="t " style="left:1422px;top:789px;font-size:14.3px;line-height:20px;color:#fff;width:60px;text-align:center;">S&amp;M</div>
<div class="t " style="left:1482px;top:789px;font-size:14.3px;line-height:20px;color:#484848;width:60px;text-align:center;">Font</div>
<div class="t " style="left:1362px;top:813px;font-size:14.3px;line-height:20px;color:#484848;width:60px;text-align:center;">Tempo</div>
<div class="t " style="left:1422px;top:813px;font-size:14.3px;line-height:20px;color:#484848;width:60px;text-align:center;">XF</div>
<div class="t " style="left:1482px;top:813px;font-size:14.3px;line-height:20px;color:#484848;width:60px;text-align:center;">FVol</div>
<div class="t " style="left:1302px;top:837px;font-size:14.3px;line-height:20px;color:#484848;width:60px;text-align:center;">Slips</div>
<div class="b" style="left:1362px;top:836px;width:60px;height:24px;background:#0000cd;"></div>
<div class="t " style="left:1362px;top:837px;font-size:14.3px;line-height:20px;color:#fff;width:60px;text-align:center;">MVol</div>
<div class="t " style="left:1422px;top:837px;font-size:14.3px;line-height:20px;color:#484848;width:60px;text-align:center;">MPX</div>
<div class="b" style="left:1482px;top:836px;width:60px;height:24px;background:#0000cd;"></div>
<div class="t " style="left:1482px;top:837px;font-size:14.3px;line-height:20px;color:#fff;width:60px;text-align:center;">CPU</div>
<div class="t " style="left:1542px;top:837px;font-size:14.3px;line-height:20px;color:#484848;width:60px;text-align:center;">10 43</div>
<svg style="left:0;top:0" width="1602" height="903"><path d="M1562.500 784v-9.500h19v9.500M1562.500 777.500h19" stroke="#fff" stroke-width="1.500" fill="none"/></svg>
<div class="b" style="left:0;top:860px;width:1602px;height:40px;background:linear-gradient(90deg,#2b3943 0,#2b3943 457px,#2a363e 800px,#2b3943 1000px,#2d3b46 1110px,#1b2731 1185px,#1c2024 1225px,#1c1c1c 1290px,#1c1c1c 100%)"></div>
<div class="b" style="left:457px;top:860px;width:160px;height:40px;background:transparent;background:linear-gradient(90deg,rgba(255,255,255,.17),rgba(255,255,255,.26))"></div>
<div class="b" style="left:153px;top:898px;width:152px;height:2px;background:#76b9ed;"></div>
<div class="b" style="left:457px;top:898px;width:160px;height:2px;background:#76b9ed;"></div>
<div class="b" style="left:623px;top:898px;width:151px;height:2px;background:#76b9ed;"></div>
<svg style="left:0;top:860px" width="460" height="40" viewBox="0 0 460 40">
<g fill="#fff"><path d="M18 13.200l6-.9v7h-6z M25 12.200l9-1.300v8.400h-9z M18 20.300h6v7l-6-.9z M25 20.300h9v8.400l-9-1.300z"/></g>
<circle cx="77" cy="17" r="5.500" fill="none" stroke="#fff" stroke-width="1.500"/><path d="M73 21.500l-7 7" stroke="#fff" stroke-width="1.700"/>
<circle cx="122" cy="20" r="7" fill="none" stroke="#fff" stroke-width="2"/>
<circle cx="170" cy="20" r="11" fill="#1b86d6"/><path d="M159.500 22a11 11 0 0 1 21-5c-3-3-9-3-11 1-2 4 1 8 6 8-6 4-14 2-16-4z" fill="#4bd27b" opacity=".85"/><path d="M161 25c2-6 8-7 12-4-3 0-5 2-4 5 1 3 5 4 8 2-4 5-13 4-16-3z" fill="#0c59a4"/>
<circle cx="334" cy="20" r="11" fill="#db4437"/><path d="M334 20l-9.500 5.500a11 11 0 0 0 9.500 5.500l5-8z" fill="#0f9d58"/><path d="M334 20h11a11 11 0 0 1-11 11z" fill="#ffcd40"/><circle cx="334" cy="20" r="5" fill="#fff"/><circle cx="334" cy="20" r="3.800" fill="#4285f4"/>
<rect x="372" y="9" width="21" height="21" rx="1" fill="#f0a30a"/><rect x="374" y="11" width="17" height="17" fill="#f6c14a"/><circle cx="380" cy="18" r="4" fill="none" stroke="#fff" stroke-width="2"/><rect x="378" y="23" width="13" height="5" fill="#fff" opacity=".8"/>
<path d="M421 11h8l2 2h11v16h-21z" fill="#ffd04c"/><rect x="421" y="15" width="21" height="14" fill="#ffe18a"/><rect x="426" y="22" width="11" height="7" fill="#3b8ed8"/><rect x="429" y="25" width="5" height="4" fill="#ffe18a"/>
</svg>
<div class="t" style="left:186.22px;letter-spacing:-0.088px;top:871px;font-size:12px;line-height:18px;color:#fff;">Public Forums • Ka...</div>
<div class="b" style="left:467px;top:868px;width:24px;height:24px;background:#000;"></div>
<svg style="left:467px;top:868px" width="24" height="24" viewBox="0 0 24 24"><path d="M10 2L0 8v9z" fill="#3f618f" opacity=".7"/><path d="M10 2L0 12v5z" fill="#6f95c8" opacity=".45"/><circle cx="10.300" cy="2.200" r="1.900" fill="#eef4ff"/><path d="M8.500 15v4M7 20l1.500-1.500 2 1.500" stroke="#333" stroke-width=".9" fill="none"/></svg>
<div class="t " style="left:187px;top:871px;font-size:12px;line-height:18px;color:#fff;"></div>
<div class="t" style="left:494.62px;letter-spacing:-0.340px;top:871px;font-size:12px;line-height:18px;color:#fff;">Karma</div>
<div class="t" style="left:552.42px;letter-spacing:-0.220px;top:871px;font-size:12px;line-height:18px;color:#fff;">License...</div>
<svg style="left:628px;top:868px" width="22" height="24" viewBox="0 0 22 24"><rect x="1" y="3" width="20" height="20" rx="2" fill="#f4f4f4"/><path d="M5 18c3-8 8-12 13-14-1 6-5 12-11 15z" fill="#6aa33a"/><path d="M5 18c3-5 6-8 9-9-1 4-4 8-8 10z" fill="#e8792b"/><path d="M6 21l6-1 6 1z" fill="#2b7bd6"/></svg>
<div class="t" style="left:656.38px;letter-spacing:0.015px;top:871px;font-size:12px;line-height:18px;color:#fff;">Adobe Photoshop</div>
<svg style="left:1380px;top:860px" width="222" height="40" viewBox="0 0 222 40">
<g stroke="#fff" stroke-width="1.200" fill="none">
<path d="M15 22.900L21.100 16.700 27.200 22.900"/>
<path d="M38.300 14v3M40.800 14v3M37 17.300h5.100v2.200a2.500 2.500 0 0 1-5.100 0zM39.500 22v3.200h2.500"/>
<rect x="42" y="16.600" width="10.400" height="8.500"/><path d="M53.300 19v3.500"/>
<path d="M44.500 18.800h6.200v4.200h-7.200z" fill="#fff" stroke="none"/>
<rect x="63.500" y="14.800" width="13.200" height="9.200"/><path d="M70 24v2.600M66 26.700h8"/>
<rect x="61.600" y="14.800" width="4" height="5" fill="#1c1c1c"/><path d="M63.600 19.800v7.500"/>
<path d="M85.500 17.600h2.500l3.200-3.600v12.200l-3.200-3.600h-2.500z"/><path d="M93.200 17.600q1.800 2.500 0 5"/><path d="M95.700 15.600q3.300 4.500 0 9" opacity=".6"/><path d="M98.200 13.600q5 6.500 0 13" opacity=".35"/>
<path d="M181.500 12.500h15v11h-6l-2.500 2.500-2.500-2.500h-4z"/>
</g><rect x="217.500" y="0" width="1" height="40" fill="#8a8a8a"/></svg>
<div class="t" style="left:1492.09px;letter-spacing:-0.215px;top:862px;font-size:12px;line-height:18px;color:#fff;">10:43 AM</div>
<div class="t" style="left:1493.40px;letter-spacing:-0.117px;top:880px;font-size:12px;line-height:18px;color:#fff;">2/1/2021</div>
<div class="b" style="left:0px;top:0px;width:2px;height:903px;background:#6b6b6b;"></div><div class="dlg">
<div class="b" style="left:405px;top:176px;width:794px;height:501px;background:#f0f0f0;border-left:1px solid #fff;border-right:1px solid #fff;"></div>
<div class="b" style="left:405px;top:176px;width:794px;height:30px;background:#fff;"></div>
<div class="t" style="left:412.97px;transform:scaleX(0.9792);transform-origin:0 50%;top:182px;font-size:12px;line-height:18px;color:#000;">Settings</div>
<div class="b" style="left:417px;top:238px;width:768px;height:374px;background:#fff;border:1px solid #dcdcdc;"></div>
<div class="b" style="left:419px;top:221px;width:49px;height:18px;background:#f0f0f0;border:1px solid #d9d9d9;border-bottom-color:#dcdcdc;"></div>
<div class="t" style="left:424.06px;transform:scaleX(0.8889);transform-origin:0 50%;top:221px;font-size:12px;line-height:18px;color:#000;">General</div>
<div class="b" style="left:467px;top:221px;width:45px;height:18px;background:#f0f0f0;border:1px solid #d9d9d9;border-bottom-color:#dcdcdc;"></div>
<div class="t" style="left:473.54px;transform:scaleX(0.8754);transform-origin:0 50%;top:221px;font-size:12px;line-height:18px;color:#000;">Layout</div>
<div class="b" style="left:511px;top:221px;width:71px;height:18px;background:#f0f0f0;border:1px solid #d9d9d9;border-bottom-color:#dcdcdc;"></div>
<div class="t" style="left:518.08px;transform:scaleX(0.8915);transform-origin:0 50%;top:221px;font-size:12px;line-height:18px;color:#000;">Appearance</div>
<div class="b" style="left:684px;top:221px;width:40px;height:18px;background:#f0f0f0;border:1px solid #d9d9d9;border-bottom-color:#dcdcdc;"></div>
<div class="t" style="left:688.24px;transform:scaleX(0.8392);transform-origin:0 50%;top:221px;font-size:12px;line-height:18px;color:#000;">SFXs</div>
<div class="b" style="left:723px;top:221px;width:51px;height:18px;background:#f0f0f0;border:1px solid #d9d9d9;border-bottom-color:#dcdcdc;"></div>
<div class="t" style="left:729.83px;transform:scaleX(0.8867);transform-origin:0 50%;top:221px;font-size:12px;line-height:18px;color:#000;">Reports</div>
<div class="b" style="left:773px;top:221px;width:53px;height:18px;background:#f0f0f0;border:1px solid #d9d9d9;border-bottom-color:#dcdcdc;"></div>
<div class="t" style="left:779.11px;transform:scaleX(0.9014);transform-origin:0 50%;top:221px;font-size:12px;line-height:18px;color:#000;">Rotation</div>
<div class="b" style="left:825px;top:221px;width:71px;height:18px;background:#f0f0f0;border:1px solid #d9d9d9;border-bottom-color:#dcdcdc;"></div>
<div class="t" style="left:830.72px;transform:scaleX(0.8887);transform-origin:0 50%;top:221px;font-size:12px;line-height:18px;color:#000;">International</div>
<div class="b" style="left:895px;top:221px;width:60px;height:18px;background:#f0f0f0;border:1px solid #d9d9d9;border-bottom-color:#dcdcdc;"></div>
<div class="t" style="left:901.68px;transform:scaleX(0.9187);transform-origin:0 50%;top:221px;font-size:12px;line-height:18px;color:#000;">Advanced</div>
<div class="b" style="left:580px;top:218px;width:104px;height:21px;background:#fff;border:1px solid #dcdcdc;border-bottom:none;"></div>
<div class="t" style="left:587.72px;transform:scaleX(0.8979);transform-origin:0 50%;top:219px;font-size:12px;line-height:18px;color:#000;">External Vid2/Vid3</div>
<div class="b" style="left:424px;top:263px;width:754px;height:343px;background:#fff;border:1px solid #dcdcdc;"></div>
<div class="b" style="left:1178px;top:265px;width:2px;height:342px;background:#efefef;"></div>
<div class="b" style="left:426px;top:606px;width:754px;height:2px;background:#efefef;"></div>
<div class="b" style="left:426px;top:245px;width:178px;height:19px;background:#f0f0f0;border:1px solid #d9d9d9;border-bottom-color:#dcdcdc;"></div>
<div class="t" style="left:431.62px;transform:scaleX(0.8931);transform-origin:0 50%;top:246px;font-size:12px;line-height:18px;color:#000;">Background / Next Singers Display</div>
<div class="b" style="left:653px;top:245px;width:54px;height:19px;background:#f0f0f0;border:1px solid #d9d9d9;border-bottom-color:#dcdcdc;"></div>
<div class="t" style="left:656.62px;transform:scaleX(0.8903);transform-origin:0 50%;top:246px;font-size:12px;line-height:18px;color:#000;">Message</div>
<div class="b" style="left:706px;top:245px;width:48px;height:19px;background:#f0f0f0;border:1px solid #d9d9d9;border-bottom-color:#dcdcdc;"></div>
<div class="t" style="left:711.64px;transform:scaleX(0.8773);transform-origin:0 50%;top:246px;font-size:12px;line-height:18px;color:#000;">Margins</div>
<div class="b" style="left:602px;top:243px;width:51px;height:21px;background:#fff;border:1px solid #dcdcdc;border-bottom:none;"></div>
<div class="t" style="left:610.04px;transform:scaleX(0.8490);transform-origin:0 50%;top:244px;font-size:12px;line-height:18px;color:#000;">Scroller</div>
<svg style="left:454px;top:290px" width="13" height="13" viewBox="0 0 13 13"><rect x=".5" y=".5" width="12" height="12" fill="#fff" stroke="#333"/><path d="M2.800 6.500l2.700 2.800 5-5.800" stroke="#000" stroke-width="1.100" fill="none"/></svg>
<div class="t" style="left:470.80px;transform:scaleX(0.9155);transform-origin:0 50%;top:287px;font-size:12px;line-height:18px;color:#000;">Show Now Playing Song</div>
<svg style="left:453px;top:319px" width="13" height="13" viewBox="0 0 13 13"><rect x=".5" y=".5" width="12" height="12" fill="#fff" stroke="#333"/><path d="M2.800 6.500l2.700 2.800 5-5.800" stroke="#000" stroke-width="1.100" fill="none"/></svg>
<div class="t" style="left:469.89px;transform:scaleX(0.9270);transform-origin:0 50%;top:316px;font-size:12px;line-height:18px;color:#000;">Show Rotation (starting at next singer)</div>
<div class="t" style="left:478.81px;transform:scaleX(0.8982);transform-origin:0 50%;top:335px;font-size:12px;line-height:18px;color:#000;">Show</div>
<div class="b" style="left:517px;top:334px;width:132px;height:21px;background:#e1e1e1;border:1px solid #adadad;"></div>
<div class="t" style="left:520.43px;transform:scaleX(0.8864);transform-origin:0 50%;top:335px;font-size:12px;line-height:18px;color:#000;">Entire Rotation</div>
<svg style="left:633px;top:341px" width="10" height="7"><path d="M1 1.500l4 4 4-4" stroke="#333" stroke-width="1.100" fill="none"/></svg>
<svg style="left:454px;top:368px" width="13" height="13" viewBox="0 0 13 13"><rect x=".5" y=".5" width="12" height="12" fill="#fff" stroke="#333"/><path d="M2.800 6.500l2.700 2.800 5-5.800" stroke="#000" stroke-width="1.100" fill="none"/></svg>
<div class="t" style="left:470.80px;transform:scaleX(0.9244);transform-origin:0 50%;top:365px;font-size:12px;line-height:18px;color:#000;">Show SingNext.com channel number when slip channel is open</div>
<svg style="left:453px;top:407px" width="13" height="13" viewBox="0 0 13 13"><rect x=".5" y=".5" width="12" height="12" fill="#fff" stroke="#333"/><path d="M2.800 6.500l2.700 2.800 5-5.800" stroke="#000" stroke-width="1.100" fill="none"/></svg>
<div class="t" style="left:469.90px;transform:scaleX(0.9141);transform-origin:0 50%;top:404px;font-size:12px;line-height:18px;color:#000;">Show KJ Information</div>
<div class="b" style="left:592px;top:405px;width:200px;height:56px;background:#fff;border:1px solid #7a7a7a;overflow:hidden">
<div class="t" style="left:63.62px;transform:scaleX(0.8939);transform-origin:0 50%;top:0px;font-size:12px;line-height:18px;color:#000;">Bob the KJ</div>
<div class="t" style="left:44.80px;transform:scaleX(0.9072);transform-origin:0 50%;top:13px;font-size:12px;line-height:18px;color:#000;">bob@latshaw.com</div>
<div class="t" style="left:56.55px;transform:scaleX(0.8910);transform-origin:0 50%;top:26px;font-size:12px;line-height:18px;color:#000;">410-555-1212</div>
<div class="t" style="left:52.60px;transform:scaleX(0.9108);transform-origin:0 50%;top:39px;font-size:12px;line-height:18px;color:#000;">DJ/KJ Services</div>
<div class="b" style="right:2px;top:1px;width:15px;height:52px;background:#f0f0f0"></div>
<div class="b" style="right:2px;top:18px;width:15px;height:17px;background:#cdcdcd"></div>
<svg style="right:5px;top:7px" width="9" height="6"><path d="M.7 5l3.800-3.800 3.800 3.800" stroke="#444" stroke-width="1.300" fill="none"/></svg>
<svg style="right:5px;bottom:6px" width="9" height="6"><path d="M.7 1l3.800 3.800 3.800-3.800" stroke="#444" stroke-width="1.300" fill="none"/></svg>
</div>
<svg style="left:453px;top:485px" width="13" height="13" viewBox="0 0 13 13"><rect x=".5" y=".5" width="12" height="12" fill="#fff" stroke="#333"/><path d="M2.800 6.500l2.700 2.800 5-5.800" stroke="#000" stroke-width="1.100" fill="none"/></svg>
<div class="t" style="left:469.90px;transform:scaleX(0.9152);transform-origin:0 50%;top:482px;font-size:12px;line-height:18px;color:#000;">Show Venue Message</div>
<div class="b" style="left:592px;top:483px;width:200px;height:54px;background:#fff;border:1px solid #7a7a7a;overflow:hidden">
<div class="t" style="left:36.15px;transform:scaleX(0.8695);transform-origin:0 50%;top:0px;font-size:12px;line-height:18px;color:#000;">Welcome to Bill's Bistro</div>
<div class="t" style="left:48.26px;transform:scaleX(0.8992);transform-origin:0 50%;top:13px;font-size:12px;line-height:18px;color:#000;">Today's Special...</div>
<div class="t" style="left:36.15px;transform:scaleX(0.9150);transform-origin:0 50%;top:39px;font-size:12px;line-height:18px;color:#000;">Veal w/Potatoes $7.99</div>
<div class="b" style="right:2px;top:1px;width:15px;height:50px;background:#f0f0f0"></div>
<svg style="right:5px;top:7px" width="9" height="6"><path d="M.7 5l3.800-3.800 3.800 3.800" stroke="#444" stroke-width="1.300" fill="none"/></svg>
<svg style="right:5px;bottom:6px" width="9" height="6"><path d="M.7 1l3.800 3.800 3.800-3.800" stroke="#444" stroke-width="1.300" fill="none"/></svg>
</div>
<div class="b" style="left:593px;top:539px;width:73px;height:21px;background:#e1e1e1;border:1px solid #adadad;"></div>
<div class="t" style="left:617.71px;transform:scaleX(0.9063);transform-origin:0 50%;top:540px;font-size:12px;line-height:18px;color:#000;">Load</div>
<div class="b" style="left:674px;top:539px;width:73px;height:21px;background:#e1e1e1;border:1px solid #adadad;"></div>
<div class="t" style="left:697.80px;transform:scaleX(0.9249);transform-origin:0 50%;top:540px;font-size:12px;line-height:18px;color:#000;">Save</div>
<div class="b" style="left:817px;top:294px;width:343px;height:53px;background:transparent;border:1px solid #dcdcdc;"></div>
<div class="b" style="left:824px;top:292px;width:30px;height:5px;background:#fff;"></div>
<div class="t" style="left:825.58px;transform:scaleX(0.9366);transform-origin:0 50%;top:286px;font-size:12px;line-height:18px;color:#000;">Dock</div>
<svg style="left:884px;top:304px" width="13" height="13" viewBox="0 0 13 13"><circle cx="6.500" cy="6.500" r="6" fill="#fff" stroke="#333"/></svg>
<div class="t" style="left:900.39px;transform:scaleX(0.9291);transform-origin:0 50%;top:302px;font-size:12px;line-height:18px;color:#000;">Left</div>
<svg style="left:1070px;top:304px" width="13" height="13" viewBox="0 0 13 13"><circle cx="6.500" cy="6.500" r="6" fill="#fff" stroke="#333"/><circle cx="6.500" cy="6.500" r="3" fill="#222"/></svg>
<div class="t" style="left:1086.99px;transform:scaleX(0.9279);transform-origin:0 50%;top:302px;font-size:12px;line-height:18px;color:#000;">Right</div>
<svg style="left:973px;top:327px" width="13" height="13" viewBox="0 0 13 13"><circle cx="6.500" cy="6.500" r="6" fill="#fff" stroke="#333"/></svg>
<div class="t" style="left:989.90px;transform:scaleX(0.9161);transform-origin:0 50%;top:325px;font-size:12px;line-height:18px;color:#000;">Bottom</div>
<div class="b" style="left:817px;top:360px;width:343px;height:73px;background:transparent;border:1px solid #dcdcdc;"></div>
<div class="b" style="left:824px;top:358px;width:32px;height:5px;background:#fff;"></div>
<div class="t" style="left:825.38px;transform:scaleX(0.8576);transform-origin:0 50%;top:352px;font-size:12px;line-height:18px;color:#000;">Color</div>
<div class="t" style="left:849.47px;transform:scaleX(0.9431);transform-origin:0 50%;top:377px;font-size:12px;line-height:18px;color:#000;">ForeColor</div>
<div class="t" style="left:849.48px;transform:scaleX(0.9396);transform-origin:0 50%;top:404px;font-size:12px;line-height:18px;color:#000;">BackColor</div>
<div class="b" style="left:926px;top:375px;width:197px;height:21px;background:#fff;border:1px solid #a9a9b1;"></div>
<div class="b" style="left:929px;top:378px;width:20px;height:15px;background:#dcdcdc;border:1px solid #a6a6a6;"></div>
<div class="t" style="left:954.03px;transform:scaleX(0.9492);transform-origin:0 50%;top:377px;font-size:12px;line-height:18px;color:#000;">Gainsboro</div>
<div class="b" style="left:1104px;top:377px;width:17px;height:17px;background:#e3e3e3;border:1px solid #b4b4b4;"></div>
<svg style="left:1108px;top:383px" width="10" height="7"><path d="M1 1.500l4 4 4-4" stroke="#333" stroke-width="1.100" fill="none"/></svg>
<div class="b" style="left:926px;top:402px;width:197px;height:21px;background:#fff;border:1px solid #a9a9b1;"></div>
<div class="b" style="left:929px;top:405px;width:20px;height:15px;background:#696969;border:1px solid #a6a6a6;"></div>
<div class="t" style="left:953.67px;transform:scaleX(0.9498);transform-origin:0 50%;top:404px;font-size:12px;line-height:18px;color:#000;">DimGray</div>
<div class="b" style="left:1104px;top:404px;width:17px;height:17px;background:#e3e3e3;border:1px solid #b4b4b4;"></div>
<svg style="left:1108px;top:410px" width="10" height="7"><path d="M1 1.500l4 4 4-4" stroke="#333" stroke-width="1.100" fill="none"/></svg>
<div class="b" style="left:817px;top:446px;width:343px;height:47px;background:transparent;border:1px solid #dcdcdc;"></div>
<div class="b" style="left:824px;top:444px;width:26px;height:5px;background:#fff;"></div>
<div class="t" style="left:825.84px;transform:scaleX(0.8444);transform-origin:0 50%;top:438px;font-size:12px;line-height:18px;color:#000;">Size</div>
<div class="b" style="left:820px;top:456px;width:337px;height:35px;background:#f0f0f0;"></div>
<div class="b" style="left:828px;top:464px;width:321px;height:4px;background:#e7eaea;border:1px solid #d6d6d6;"></div>
<svg style="left:952px;top:458px" width="11" height="19"><path d="M0 0h11v14l-5.500 5-5.500-5z" fill="#0078d7"/></svg>
<div class="b" style="left:833px;top:478px;width:1px;height:4px;background:#c4c4c4;"></div>
<div class="b" style="left:936px;top:478px;width:1px;height:4px;background:#c4c4c4;"></div>
<div class="b" style="left:1040px;top:478px;width:1px;height:4px;background:#c4c4c4;"></div>
<div class="b" style="left:1143px;top:478px;width:1px;height:4px;background:#c4c4c4;"></div>
<div class="b" style="left:817px;top:510px;width:343px;height:49px;background:transparent;border:1px solid #dcdcdc;"></div>
<div class="b" style="left:824px;top:508px;width:36px;height:5px;background:#fff;"></div>
<div class="t" style="left:825.81px;transform:scaleX(0.8957);transform-origin:0 50%;top:502px;font-size:12px;line-height:18px;color:#000;">Speed</div>
<div class="b" style="left:820px;top:520px;width:337px;height:37px;background:#f0f0f0;"></div>
<div class="b" style="left:828px;top:528px;width:321px;height:4px;background:#e7eaea;border:1px solid #d6d6d6;"></div>
<svg style="left:983px;top:522px" width="11" height="19"><path d="M0 0h11v14l-5.500 5-5.500-5z" fill="#0078d7"/></svg>
<div class="b" style="left:833px;top:542px;width:1px;height:4px;background:#c4c4c4;"></div>
<div class="b" style="left:885px;top:542px;width:1px;height:4px;background:#c4c4c4;"></div>
<div class="b" style="left:936px;top:542px;width:1px;height:4px;background:#c4c4c4;"></div>
<div class="b" style="left:988px;top:542px;width:1px;height:4px;background:#c4c4c4;"></div>
<div class="b" style="left:1040px;top:542px;width:1px;height:4px;background:#c4c4c4;"></div>
<div class="b" style="left:1091px;top:542px;width:1px;height:4px;background:#c4c4c4;"></div>
<div class="b" style="left:1143px;top:542px;width:1px;height:4px;background:#c4c4c4;"></div>
<div class="b" style="left:1088px;top:626px;width:98px;height:38px;background:#e1e1e1;border:1px solid #adadad;"></div>
<div class="t" style="left:1123.28px;transform:scaleX(0.8599);transform-origin:0 50%;top:636px;font-size:12px;line-height:18px;color:#000;">Close</div>
</div></body></html>
